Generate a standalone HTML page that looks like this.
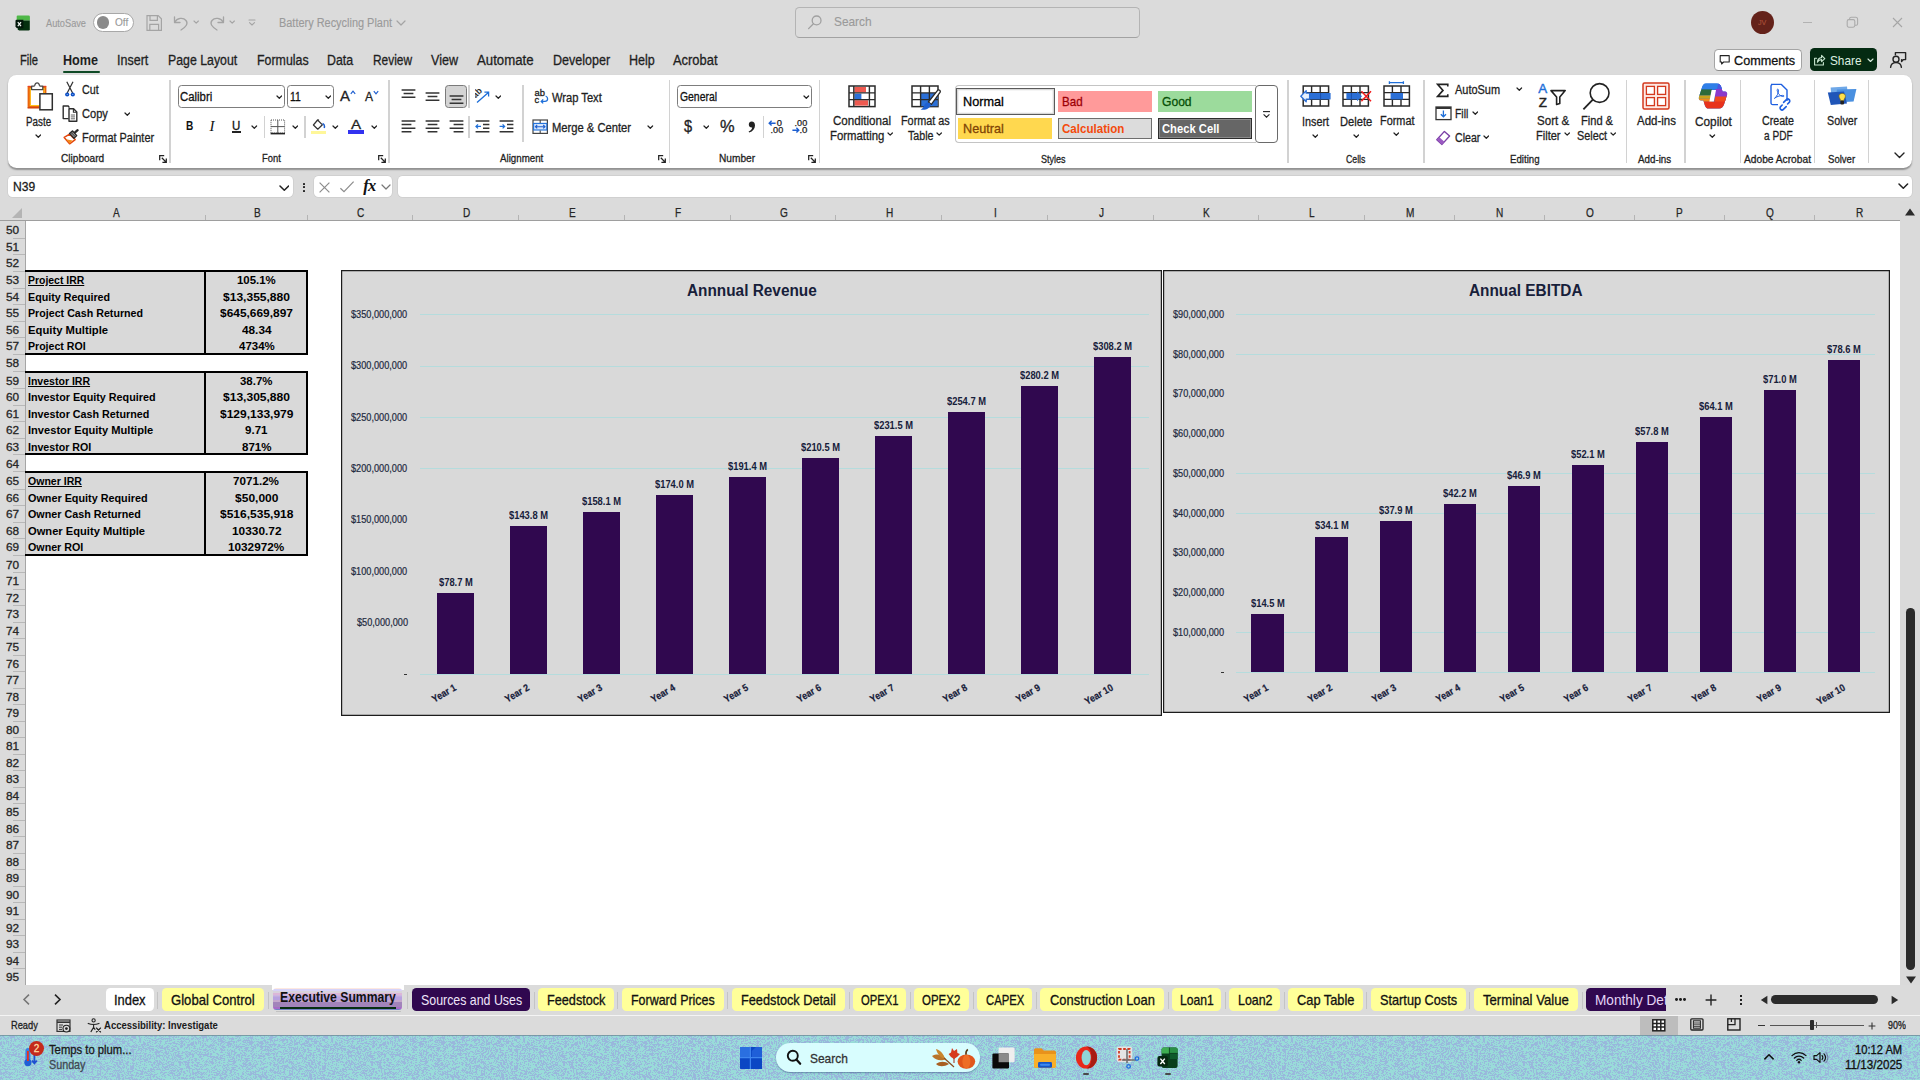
<!DOCTYPE html>
<html lang="en"><head><meta charset="utf-8"><title>Battery Recycling Plant - Excel</title><style>
html,body{margin:0;padding:0;}
body{width:1920px;height:1080px;overflow:hidden;position:relative;background:#dbdbdb;font-family:"Liberation Sans",sans-serif;}
.b{position:absolute;box-sizing:border-box;display:block;}
.t{position:absolute;white-space:nowrap;line-height:1;transform-origin:0 50%;display:block;}
</style></head><body>
<div class="b" style="left:26.00px;top:221.00px;width:1874.00px;height:764.00px;background:#fff;"></div>
<div class="b" style="left:0.00px;top:201.00px;width:1920.00px;height:20.00px;background:#dbdbdb;"></div>
<div class="b" style="left:0.00px;top:220.00px;width:1900.00px;height:1.00px;background:#9e9e9e;"></div>
<div class="b" style="left:0.00px;top:221.00px;width:25.00px;height:764.00px;background:#dbdbdb;"></div>
<div class="b" style="left:25.00px;top:221.00px;width:1.00px;height:764.00px;background:#a6a6a6;"></div>
<svg class="b" style="left:11.00px;top:207.00px;" width="12" height="12" viewBox="0 0 12 12"><path d="M11 1 L11 11 L1 11 Z" fill="#b4b4b4"/></svg>
<div class="b" style="left:205.00px;top:214.50px;width:1.00px;height:5.50px;background:#b4b4b4;"></div>
<span class="t" style="left:113.09px;top:207.00px;font-size:12px;color:#262626;transform:scaleX(0.8400);-webkit-text-stroke:0.25px #262626;">A</span>
<div class="b" style="left:307.00px;top:214.50px;width:1.00px;height:5.50px;background:#b4b4b4;"></div>
<span class="t" style="left:253.84px;top:207.00px;font-size:12px;color:#262626;transform:scaleX(0.8400);-webkit-text-stroke:0.25px #262626;">B</span>
<div class="b" style="left:412.00px;top:214.50px;width:1.00px;height:5.50px;background:#b4b4b4;"></div>
<span class="t" style="left:357.06px;top:207.00px;font-size:12px;color:#262626;transform:scaleX(0.8400);-webkit-text-stroke:0.25px #262626;">C</span>
<div class="b" style="left:518.00px;top:214.50px;width:1.00px;height:5.50px;background:#b4b4b4;"></div>
<span class="t" style="left:462.56px;top:207.00px;font-size:12px;color:#262626;transform:scaleX(0.8400);-webkit-text-stroke:0.25px #262626;">D</span>
<div class="b" style="left:624.00px;top:214.50px;width:1.00px;height:5.50px;background:#b4b4b4;"></div>
<span class="t" style="left:568.84px;top:207.00px;font-size:12px;color:#262626;transform:scaleX(0.8400);-webkit-text-stroke:0.25px #262626;">E</span>
<div class="b" style="left:730.00px;top:214.50px;width:1.00px;height:5.50px;background:#b4b4b4;"></div>
<span class="t" style="left:675.12px;top:207.00px;font-size:12px;color:#262626;transform:scaleX(0.8400);-webkit-text-stroke:0.25px #262626;">F</span>
<div class="b" style="left:835.00px;top:214.50px;width:1.00px;height:5.50px;background:#b4b4b4;"></div>
<span class="t" style="left:779.78px;top:207.00px;font-size:12px;color:#262626;transform:scaleX(0.8400);-webkit-text-stroke:0.25px #262626;">G</span>
<div class="b" style="left:941.00px;top:214.50px;width:1.00px;height:5.50px;background:#b4b4b4;"></div>
<span class="t" style="left:885.56px;top:207.00px;font-size:12px;color:#262626;transform:scaleX(0.8400);-webkit-text-stroke:0.25px #262626;">H</span>
<div class="b" style="left:1047.00px;top:214.50px;width:1.00px;height:5.50px;background:#b4b4b4;"></div>
<span class="t" style="left:993.80px;top:207.00px;font-size:12px;color:#262626;transform:scaleX(0.8400);-webkit-text-stroke:0.25px #262626;">I</span>
<div class="b" style="left:1153.00px;top:214.50px;width:1.00px;height:5.50px;background:#b4b4b4;"></div>
<span class="t" style="left:1098.68px;top:207.00px;font-size:12px;color:#262626;transform:scaleX(0.8400);-webkit-text-stroke:0.25px #262626;">J</span>
<div class="b" style="left:1258.00px;top:214.50px;width:1.00px;height:5.50px;background:#b4b4b4;"></div>
<span class="t" style="left:1203.34px;top:207.00px;font-size:12px;color:#262626;transform:scaleX(0.8400);-webkit-text-stroke:0.25px #262626;">K</span>
<div class="b" style="left:1363.50px;top:214.50px;width:1.00px;height:5.50px;background:#b4b4b4;"></div>
<span class="t" style="left:1309.15px;top:207.00px;font-size:12px;color:#262626;transform:scaleX(0.8400);-webkit-text-stroke:0.25px #262626;">L</span>
<div class="b" style="left:1453.50px;top:214.50px;width:1.00px;height:5.50px;background:#b4b4b4;"></div>
<span class="t" style="left:1405.50px;top:207.00px;font-size:12px;color:#262626;transform:scaleX(0.8400);-webkit-text-stroke:0.25px #262626;">M</span>
<div class="b" style="left:1543.50px;top:214.50px;width:1.00px;height:5.50px;background:#b4b4b4;"></div>
<span class="t" style="left:1496.06px;top:207.00px;font-size:12px;color:#262626;transform:scaleX(0.8400);-webkit-text-stroke:0.25px #262626;">N</span>
<div class="b" style="left:1633.50px;top:214.50px;width:1.00px;height:5.50px;background:#b4b4b4;"></div>
<span class="t" style="left:1585.78px;top:207.00px;font-size:12px;color:#262626;transform:scaleX(0.8400);-webkit-text-stroke:0.25px #262626;">O</span>
<div class="b" style="left:1723.50px;top:214.50px;width:1.00px;height:5.50px;background:#b4b4b4;"></div>
<span class="t" style="left:1676.34px;top:207.00px;font-size:12px;color:#262626;transform:scaleX(0.8400);-webkit-text-stroke:0.25px #262626;">P</span>
<div class="b" style="left:1813.50px;top:214.50px;width:1.00px;height:5.50px;background:#b4b4b4;"></div>
<span class="t" style="left:1765.78px;top:207.00px;font-size:12px;color:#262626;transform:scaleX(0.8400);-webkit-text-stroke:0.25px #262626;">Q</span>
<span class="t" style="left:1856.06px;top:207.00px;font-size:12px;color:#262626;transform:scaleX(0.8400);-webkit-text-stroke:0.25px #262626;">R</span>
<span class="t" style="left:6.12px;top:224.00px;font-size:11.6px;color:#262626;transform:scaleX(1.0200);-webkit-text-stroke:0.3px #262626;">50</span>
<div class="b" style="left:13.00px;top:237.50px;width:12.00px;height:1.00px;background:#b8b8b8;"></div>
<span class="t" style="left:6.12px;top:241.00px;font-size:11.6px;color:#262626;transform:scaleX(1.0200);-webkit-text-stroke:0.3px #262626;">51</span>
<div class="b" style="left:13.00px;top:253.50px;width:12.00px;height:1.00px;background:#b8b8b8;"></div>
<span class="t" style="left:6.12px;top:257.00px;font-size:11.6px;color:#262626;transform:scaleX(1.0200);-webkit-text-stroke:0.3px #262626;">52</span>
<div class="b" style="left:13.00px;top:270.50px;width:12.00px;height:1.00px;background:#b8b8b8;"></div>
<span class="t" style="left:6.12px;top:274.00px;font-size:11.6px;color:#262626;transform:scaleX(1.0200);-webkit-text-stroke:0.3px #262626;">53</span>
<div class="b" style="left:13.00px;top:287.50px;width:12.00px;height:1.00px;background:#b8b8b8;"></div>
<span class="t" style="left:6.12px;top:291.00px;font-size:11.6px;color:#262626;transform:scaleX(1.0200);-webkit-text-stroke:0.3px #262626;">54</span>
<div class="b" style="left:13.00px;top:303.50px;width:12.00px;height:1.00px;background:#b8b8b8;"></div>
<span class="t" style="left:6.12px;top:307.00px;font-size:11.6px;color:#262626;transform:scaleX(1.0200);-webkit-text-stroke:0.3px #262626;">55</span>
<div class="b" style="left:13.00px;top:320.50px;width:12.00px;height:1.00px;background:#b8b8b8;"></div>
<span class="t" style="left:6.12px;top:324.00px;font-size:11.6px;color:#262626;transform:scaleX(1.0200);-webkit-text-stroke:0.3px #262626;">56</span>
<div class="b" style="left:13.00px;top:336.50px;width:12.00px;height:1.00px;background:#b8b8b8;"></div>
<span class="t" style="left:6.12px;top:340.00px;font-size:11.6px;color:#262626;transform:scaleX(1.0200);-webkit-text-stroke:0.3px #262626;">57</span>
<div class="b" style="left:13.00px;top:353.50px;width:12.00px;height:1.00px;background:#b8b8b8;"></div>
<span class="t" style="left:6.12px;top:357.00px;font-size:11.6px;color:#262626;transform:scaleX(1.0200);-webkit-text-stroke:0.3px #262626;">58</span>
<div class="b" style="left:13.00px;top:370.50px;width:12.00px;height:1.00px;background:#b8b8b8;"></div>
<span class="t" style="left:6.12px;top:375.00px;font-size:11.6px;color:#262626;transform:scaleX(1.0200);-webkit-text-stroke:0.3px #262626;">59</span>
<div class="b" style="left:13.00px;top:387.50px;width:12.00px;height:1.00px;background:#b8b8b8;"></div>
<span class="t" style="left:6.12px;top:391.00px;font-size:11.6px;color:#262626;transform:scaleX(1.0200);-webkit-text-stroke:0.3px #262626;">60</span>
<div class="b" style="left:13.00px;top:404.50px;width:12.00px;height:1.00px;background:#b8b8b8;"></div>
<span class="t" style="left:6.12px;top:408.00px;font-size:11.6px;color:#262626;transform:scaleX(1.0200);-webkit-text-stroke:0.3px #262626;">61</span>
<div class="b" style="left:13.00px;top:420.50px;width:12.00px;height:1.00px;background:#b8b8b8;"></div>
<span class="t" style="left:6.12px;top:424.00px;font-size:11.6px;color:#262626;transform:scaleX(1.0200);-webkit-text-stroke:0.3px #262626;">62</span>
<div class="b" style="left:13.00px;top:437.50px;width:12.00px;height:1.00px;background:#b8b8b8;"></div>
<span class="t" style="left:6.12px;top:441.00px;font-size:11.6px;color:#262626;transform:scaleX(1.0200);-webkit-text-stroke:0.3px #262626;">63</span>
<div class="b" style="left:13.00px;top:453.50px;width:12.00px;height:1.00px;background:#b8b8b8;"></div>
<span class="t" style="left:6.12px;top:458.00px;font-size:11.6px;color:#262626;transform:scaleX(1.0200);-webkit-text-stroke:0.3px #262626;">64</span>
<div class="b" style="left:13.00px;top:470.50px;width:12.00px;height:1.00px;background:#b8b8b8;"></div>
<span class="t" style="left:6.12px;top:475.00px;font-size:11.6px;color:#262626;transform:scaleX(1.0200);-webkit-text-stroke:0.3px #262626;">65</span>
<div class="b" style="left:13.00px;top:488.50px;width:12.00px;height:1.00px;background:#b8b8b8;"></div>
<span class="t" style="left:6.12px;top:492.00px;font-size:11.6px;color:#262626;transform:scaleX(1.0200);-webkit-text-stroke:0.3px #262626;">66</span>
<div class="b" style="left:13.00px;top:504.50px;width:12.00px;height:1.00px;background:#b8b8b8;"></div>
<span class="t" style="left:6.12px;top:508.00px;font-size:11.6px;color:#262626;transform:scaleX(1.0200);-webkit-text-stroke:0.3px #262626;">67</span>
<div class="b" style="left:13.00px;top:521.50px;width:12.00px;height:1.00px;background:#b8b8b8;"></div>
<span class="t" style="left:6.12px;top:525.00px;font-size:11.6px;color:#262626;transform:scaleX(1.0200);-webkit-text-stroke:0.3px #262626;">68</span>
<div class="b" style="left:13.00px;top:537.50px;width:12.00px;height:1.00px;background:#b8b8b8;"></div>
<span class="t" style="left:6.12px;top:541.00px;font-size:11.6px;color:#262626;transform:scaleX(1.0200);-webkit-text-stroke:0.3px #262626;">69</span>
<div class="b" style="left:13.00px;top:554.50px;width:12.00px;height:1.00px;background:#b8b8b8;"></div>
<span class="t" style="left:6.12px;top:559.00px;font-size:11.6px;color:#262626;transform:scaleX(1.0200);-webkit-text-stroke:0.3px #262626;">70</span>
<div class="b" style="left:13.00px;top:571.50px;width:12.00px;height:1.00px;background:#b8b8b8;"></div>
<span class="t" style="left:6.12px;top:575.00px;font-size:11.6px;color:#262626;transform:scaleX(1.0200);-webkit-text-stroke:0.3px #262626;">71</span>
<div class="b" style="left:13.00px;top:588.50px;width:12.00px;height:1.00px;background:#b8b8b8;"></div>
<span class="t" style="left:6.12px;top:592.00px;font-size:11.6px;color:#262626;transform:scaleX(1.0200);-webkit-text-stroke:0.3px #262626;">72</span>
<div class="b" style="left:13.00px;top:604.50px;width:12.00px;height:1.00px;background:#b8b8b8;"></div>
<span class="t" style="left:6.12px;top:608.00px;font-size:11.6px;color:#262626;transform:scaleX(1.0200);-webkit-text-stroke:0.3px #262626;">73</span>
<div class="b" style="left:13.00px;top:621.50px;width:12.00px;height:1.00px;background:#b8b8b8;"></div>
<span class="t" style="left:6.12px;top:625.00px;font-size:11.6px;color:#262626;transform:scaleX(1.0200);-webkit-text-stroke:0.3px #262626;">74</span>
<div class="b" style="left:13.00px;top:637.50px;width:12.00px;height:1.00px;background:#b8b8b8;"></div>
<span class="t" style="left:6.12px;top:641.00px;font-size:11.6px;color:#262626;transform:scaleX(1.0200);-webkit-text-stroke:0.3px #262626;">75</span>
<div class="b" style="left:13.00px;top:654.50px;width:12.00px;height:1.00px;background:#b8b8b8;"></div>
<span class="t" style="left:6.12px;top:658.00px;font-size:11.6px;color:#262626;transform:scaleX(1.0200);-webkit-text-stroke:0.3px #262626;">76</span>
<div class="b" style="left:13.00px;top:670.50px;width:12.00px;height:1.00px;background:#b8b8b8;"></div>
<span class="t" style="left:6.12px;top:674.00px;font-size:11.6px;color:#262626;transform:scaleX(1.0200);-webkit-text-stroke:0.3px #262626;">77</span>
<div class="b" style="left:13.00px;top:687.50px;width:12.00px;height:1.00px;background:#b8b8b8;"></div>
<span class="t" style="left:6.12px;top:691.00px;font-size:11.6px;color:#262626;transform:scaleX(1.0200);-webkit-text-stroke:0.3px #262626;">78</span>
<div class="b" style="left:13.00px;top:703.50px;width:12.00px;height:1.00px;background:#b8b8b8;"></div>
<span class="t" style="left:6.12px;top:707.00px;font-size:11.6px;color:#262626;transform:scaleX(1.0200);-webkit-text-stroke:0.3px #262626;">79</span>
<div class="b" style="left:13.00px;top:720.50px;width:12.00px;height:1.00px;background:#b8b8b8;"></div>
<span class="t" style="left:6.12px;top:724.00px;font-size:11.6px;color:#262626;transform:scaleX(1.0200);-webkit-text-stroke:0.3px #262626;">80</span>
<div class="b" style="left:13.00px;top:736.50px;width:12.00px;height:1.00px;background:#b8b8b8;"></div>
<span class="t" style="left:6.12px;top:740.00px;font-size:11.6px;color:#262626;transform:scaleX(1.0200);-webkit-text-stroke:0.3px #262626;">81</span>
<div class="b" style="left:13.00px;top:753.50px;width:12.00px;height:1.00px;background:#b8b8b8;"></div>
<span class="t" style="left:6.12px;top:757.00px;font-size:11.6px;color:#262626;transform:scaleX(1.0200);-webkit-text-stroke:0.3px #262626;">82</span>
<div class="b" style="left:13.00px;top:769.50px;width:12.00px;height:1.00px;background:#b8b8b8;"></div>
<span class="t" style="left:6.12px;top:773.00px;font-size:11.6px;color:#262626;transform:scaleX(1.0200);-webkit-text-stroke:0.3px #262626;">83</span>
<div class="b" style="left:13.00px;top:786.50px;width:12.00px;height:1.00px;background:#b8b8b8;"></div>
<span class="t" style="left:6.12px;top:790.00px;font-size:11.6px;color:#262626;transform:scaleX(1.0200);-webkit-text-stroke:0.3px #262626;">84</span>
<div class="b" style="left:13.00px;top:802.50px;width:12.00px;height:1.00px;background:#b8b8b8;"></div>
<span class="t" style="left:6.12px;top:806.00px;font-size:11.6px;color:#262626;transform:scaleX(1.0200);-webkit-text-stroke:0.3px #262626;">85</span>
<div class="b" style="left:13.00px;top:819.50px;width:12.00px;height:1.00px;background:#b8b8b8;"></div>
<span class="t" style="left:6.12px;top:823.00px;font-size:11.6px;color:#262626;transform:scaleX(1.0200);-webkit-text-stroke:0.3px #262626;">86</span>
<div class="b" style="left:13.00px;top:835.50px;width:12.00px;height:1.00px;background:#b8b8b8;"></div>
<span class="t" style="left:6.12px;top:839.00px;font-size:11.6px;color:#262626;transform:scaleX(1.0200);-webkit-text-stroke:0.3px #262626;">87</span>
<div class="b" style="left:13.00px;top:852.50px;width:12.00px;height:1.00px;background:#b8b8b8;"></div>
<span class="t" style="left:6.12px;top:856.00px;font-size:11.6px;color:#262626;transform:scaleX(1.0200);-webkit-text-stroke:0.3px #262626;">88</span>
<div class="b" style="left:13.00px;top:868.50px;width:12.00px;height:1.00px;background:#b8b8b8;"></div>
<span class="t" style="left:6.12px;top:872.00px;font-size:11.6px;color:#262626;transform:scaleX(1.0200);-webkit-text-stroke:0.3px #262626;">89</span>
<div class="b" style="left:13.00px;top:885.50px;width:12.00px;height:1.00px;background:#b8b8b8;"></div>
<span class="t" style="left:6.12px;top:889.00px;font-size:11.6px;color:#262626;transform:scaleX(1.0200);-webkit-text-stroke:0.3px #262626;">90</span>
<div class="b" style="left:13.00px;top:901.50px;width:12.00px;height:1.00px;background:#b8b8b8;"></div>
<span class="t" style="left:6.12px;top:905.00px;font-size:11.6px;color:#262626;transform:scaleX(1.0200);-webkit-text-stroke:0.3px #262626;">91</span>
<div class="b" style="left:13.00px;top:918.50px;width:12.00px;height:1.00px;background:#b8b8b8;"></div>
<span class="t" style="left:6.12px;top:922.00px;font-size:11.6px;color:#262626;transform:scaleX(1.0200);-webkit-text-stroke:0.3px #262626;">92</span>
<div class="b" style="left:13.00px;top:934.50px;width:12.00px;height:1.00px;background:#b8b8b8;"></div>
<span class="t" style="left:6.12px;top:938.00px;font-size:11.6px;color:#262626;transform:scaleX(1.0200);-webkit-text-stroke:0.3px #262626;">93</span>
<div class="b" style="left:13.00px;top:951.50px;width:12.00px;height:1.00px;background:#b8b8b8;"></div>
<span class="t" style="left:6.12px;top:955.00px;font-size:11.6px;color:#262626;transform:scaleX(1.0200);-webkit-text-stroke:0.3px #262626;">94</span>
<div class="b" style="left:13.00px;top:967.50px;width:12.00px;height:1.00px;background:#b8b8b8;"></div>
<span class="t" style="left:6.12px;top:971.00px;font-size:11.6px;color:#262626;transform:scaleX(1.0200);-webkit-text-stroke:0.3px #262626;">95</span>
<div class="b" style="left:26.00px;top:270.00px;width:282.00px;height:85.00px;background:#d9d9d9;"></div>
<div class="b" style="left:25.00px;top:270.00px;width:283.00px;height:2.00px;background:#000;"></div>
<div class="b" style="left:25.00px;top:353.00px;width:283.00px;height:2.00px;background:#000;"></div>
<div class="b" style="left:204.00px;top:270.00px;width:2.00px;height:85.00px;background:#000;"></div>
<div class="b" style="left:306.20px;top:270.00px;width:1.80px;height:85.00px;background:#000;"></div>
<span class="t" style="left:27.90px;top:274.00px;font-size:11.6px;color:#000;font-weight:700;text-decoration:underline;transform:scaleX(0.9004);">Project IRR</span>
<span class="t" style="left:237.02px;top:274.00px;font-size:11.6px;color:#000;font-weight:700;transform:scaleX(0.9849);">105.1%</span>
<span class="t" style="left:27.90px;top:291.00px;font-size:11.6px;color:#000;font-weight:700;transform:scaleX(0.9231);">Equity Required</span>
<span class="t" style="left:222.90px;top:291.00px;font-size:11.6px;color:#000;font-weight:700;transform:scaleX(1.0386);">$13,355,880</span>
<span class="t" style="left:27.90px;top:307.00px;font-size:11.6px;color:#000;font-weight:700;transform:scaleX(0.9204);">Project Cash Returned</span>
<span class="t" style="left:219.90px;top:307.00px;font-size:11.6px;color:#000;font-weight:700;transform:scaleX(1.0288);">$645,669,897</span>
<span class="t" style="left:27.90px;top:324.00px;font-size:11.6px;color:#000;font-weight:700;transform:scaleX(0.9711);">Equity Multiple</span>
<span class="t" style="left:241.65px;top:324.00px;font-size:11.6px;color:#000;font-weight:700;transform:scaleX(1.0162);">48.34</span>
<span class="t" style="left:27.90px;top:340.00px;font-size:11.6px;color:#000;font-weight:700;transform:scaleX(0.9118);">Project ROI</span>
<span class="t" style="left:238.52px;top:340.00px;font-size:11.6px;color:#000;font-weight:700;transform:scaleX(0.9898);">4734%</span>
<div class="b" style="left:26.00px;top:370.80px;width:282.00px;height:84.40px;background:#d9d9d9;"></div>
<div class="b" style="left:25.00px;top:370.80px;width:283.00px;height:2.00px;background:#000;"></div>
<div class="b" style="left:25.00px;top:453.20px;width:283.00px;height:2.00px;background:#000;"></div>
<div class="b" style="left:204.00px;top:370.80px;width:2.00px;height:84.40px;background:#000;"></div>
<div class="b" style="left:306.20px;top:370.80px;width:1.80px;height:84.40px;background:#000;"></div>
<span class="t" style="left:27.90px;top:375.00px;font-size:11.6px;color:#000;font-weight:700;text-decoration:underline;transform:scaleX(0.9089);">Investor IRR</span>
<span class="t" style="left:240.15px;top:375.00px;font-size:11.6px;color:#000;font-weight:700;transform:scaleX(0.9881);">38.7%</span>
<span class="t" style="left:27.90px;top:391.00px;font-size:11.6px;color:#000;font-weight:700;transform:scaleX(0.9294);">Investor Equity Required</span>
<span class="t" style="left:222.90px;top:391.00px;font-size:11.6px;color:#000;font-weight:700;transform:scaleX(1.0386);">$13,305,880</span>
<span class="t" style="left:27.90px;top:408.00px;font-size:11.6px;color:#000;font-weight:700;transform:scaleX(0.9270);">Investor Cash Returned</span>
<span class="t" style="left:219.65px;top:408.00px;font-size:11.6px;color:#000;font-weight:700;transform:scaleX(1.0358);">$129,133,979</span>
<span class="t" style="left:27.90px;top:424.00px;font-size:11.6px;color:#000;font-weight:700;transform:scaleX(0.9577);">Investor Equity Multiple</span>
<span class="t" style="left:245.15px;top:424.00px;font-size:11.6px;color:#000;font-weight:700;transform:scaleX(0.9966);">9.71</span>
<span class="t" style="left:27.90px;top:441.00px;font-size:11.6px;color:#000;font-weight:700;transform:scaleX(0.9178);">Investor ROI</span>
<span class="t" style="left:241.65px;top:441.00px;font-size:11.6px;color:#000;font-weight:700;transform:scaleX(0.9943);">871%</span>
<div class="b" style="left:26.00px;top:471.20px;width:282.00px;height:84.30px;background:#d9d9d9;"></div>
<div class="b" style="left:25.00px;top:471.20px;width:283.00px;height:2.00px;background:#000;"></div>
<div class="b" style="left:25.00px;top:553.50px;width:283.00px;height:2.00px;background:#000;"></div>
<div class="b" style="left:204.00px;top:471.20px;width:2.00px;height:84.30px;background:#000;"></div>
<div class="b" style="left:306.20px;top:471.20px;width:1.80px;height:84.30px;background:#000;"></div>
<span class="t" style="left:27.90px;top:475.00px;font-size:11.6px;color:#000;font-weight:700;text-decoration:underline;transform:scaleX(0.9090);">Owner IRR</span>
<span class="t" style="left:233.40px;top:475.00px;font-size:11.6px;color:#000;font-weight:700;transform:scaleX(1.0045);">7071.2%</span>
<span class="t" style="left:27.90px;top:492.00px;font-size:11.6px;color:#000;font-weight:700;transform:scaleX(0.9325);">Owner Equity Required</span>
<span class="t" style="left:234.65px;top:492.00px;font-size:11.6px;color:#000;font-weight:700;transform:scaleX(1.0374);">$50,000</span>
<span class="t" style="left:27.90px;top:508.00px;font-size:11.6px;color:#000;font-weight:700;transform:scaleX(0.9268);">Owner Cash Returned</span>
<span class="t" style="left:219.65px;top:508.00px;font-size:11.6px;color:#000;font-weight:700;transform:scaleX(1.0358);">$516,535,918</span>
<span class="t" style="left:27.90px;top:525.00px;font-size:11.6px;color:#000;font-weight:700;transform:scaleX(0.9614);">Owner Equity Multiple</span>
<span class="t" style="left:231.65px;top:525.00px;font-size:11.6px;color:#000;font-weight:700;transform:scaleX(1.0231);">10330.72</span>
<span class="t" style="left:27.90px;top:541.00px;font-size:11.6px;color:#000;font-weight:700;transform:scaleX(0.9225);">Owner ROI</span>
<span class="t" style="left:228.27px;top:541.00px;font-size:11.6px;color:#000;font-weight:700;transform:scaleX(1.0140);">1032972%</span>
<div class="b" style="left:341.00px;top:270.00px;width:821.00px;height:445.50px;background:#d9d9d9;box-shadow:inset 0 0 0 1.2px #1c1c1c;"></div>
<div class="b" style="left:420.00px;top:314.00px;width:729.30px;height:1.00px;background:#b5dcdd;"></div>
<span class="t" style="left:351.44px;top:310.00px;font-size:10px;color:#222a40;transform:scaleX(0.9180);-webkit-text-stroke:0.2px #222a40;">$350,000,000</span>
<div class="b" style="left:420.00px;top:366.00px;width:729.30px;height:1.00px;background:#b5dcdd;"></div>
<span class="t" style="left:351.44px;top:361.00px;font-size:10px;color:#222a40;transform:scaleX(0.9180);-webkit-text-stroke:0.2px #222a40;">$300,000,000</span>
<div class="b" style="left:420.00px;top:417.00px;width:729.30px;height:1.00px;background:#b5dcdd;"></div>
<span class="t" style="left:351.44px;top:413.00px;font-size:10px;color:#222a40;transform:scaleX(0.9180);-webkit-text-stroke:0.2px #222a40;">$250,000,000</span>
<div class="b" style="left:420.00px;top:468.00px;width:729.30px;height:1.00px;background:#b5dcdd;"></div>
<span class="t" style="left:351.44px;top:464.00px;font-size:10px;color:#222a40;transform:scaleX(0.9180);-webkit-text-stroke:0.2px #222a40;">$200,000,000</span>
<span class="t" style="left:351.44px;top:515.00px;font-size:10px;color:#222a40;transform:scaleX(0.9180);-webkit-text-stroke:0.2px #222a40;">$150,000,000</span>
<span class="t" style="left:351.44px;top:567.00px;font-size:10px;color:#222a40;transform:scaleX(0.9180);-webkit-text-stroke:0.2px #222a40;">$100,000,000</span>
<span class="t" style="left:356.55px;top:618.00px;font-size:10px;color:#222a40;transform:scaleX(0.9180);-webkit-text-stroke:0.2px #222a40;">$50,000,000</span>
<div class="b" style="left:420.00px;top:674.00px;width:729.30px;height:1.00px;background:#b5dcdd;"></div>
<div class="b" style="left:404.30px;top:673.80px;width:3.20px;height:1.10px;background:#333;"></div>
<span class="t" style="left:686.64px;top:283.00px;font-size:16px;color:#17203a;font-weight:700;transform:scaleX(0.9600);">Annnual Revenue</span>
<div class="b" style="left:437.10px;top:593.37px;width:37.20px;height:80.93px;background:#30084f;"></div>
<span class="t" style="left:438.79px;top:578.00px;font-size:10.4px;color:#17203a;font-weight:700;transform:scaleX(0.9000);">$78.7 M</span>
<span class="t" style="left:429.27px;top:681.20px;font-size:10px;font-weight:700;color:#17203a;line-height:11px;-webkit-text-stroke:0.2px #17203a;width:26.23px;transform-origin:100% 50%;transform:rotate(-30deg);"><span style="display:inline-block;transform-origin:0 50%;transform:scaleX(0.89);white-space:nowrap">Year 1</span></span>
<div class="b" style="left:510.10px;top:526.43px;width:37.20px;height:147.87px;background:#30084f;"></div>
<span class="t" style="left:509.19px;top:511.00px;font-size:10.4px;color:#17203a;font-weight:700;transform:scaleX(0.9000);">$143.8 M</span>
<span class="t" style="left:502.27px;top:681.20px;font-size:10px;font-weight:700;color:#17203a;line-height:11px;-webkit-text-stroke:0.2px #17203a;width:26.23px;transform-origin:100% 50%;transform:rotate(-30deg);"><span style="display:inline-block;transform-origin:0 50%;transform:scaleX(0.89);white-space:nowrap">Year 2</span></span>
<div class="b" style="left:583.10px;top:511.73px;width:37.20px;height:162.57px;background:#30084f;"></div>
<span class="t" style="left:582.19px;top:497.00px;font-size:10.4px;color:#17203a;font-weight:700;transform:scaleX(0.9000);">$158.1 M</span>
<span class="t" style="left:575.27px;top:681.20px;font-size:10px;font-weight:700;color:#17203a;line-height:11px;-webkit-text-stroke:0.2px #17203a;width:26.23px;transform-origin:100% 50%;transform:rotate(-30deg);"><span style="display:inline-block;transform-origin:0 50%;transform:scaleX(0.89);white-space:nowrap">Year 3</span></span>
<div class="b" style="left:656.10px;top:495.38px;width:37.20px;height:178.92px;background:#30084f;"></div>
<span class="t" style="left:655.19px;top:480.00px;font-size:10.4px;color:#17203a;font-weight:700;transform:scaleX(0.9000);">$174.0 M</span>
<span class="t" style="left:648.27px;top:681.20px;font-size:10px;font-weight:700;color:#17203a;line-height:11px;-webkit-text-stroke:0.2px #17203a;width:26.23px;transform-origin:100% 50%;transform:rotate(-30deg);"><span style="display:inline-block;transform-origin:0 50%;transform:scaleX(0.89);white-space:nowrap">Year 4</span></span>
<div class="b" style="left:729.10px;top:477.49px;width:37.20px;height:196.81px;background:#30084f;"></div>
<span class="t" style="left:728.19px;top:462.00px;font-size:10.4px;color:#17203a;font-weight:700;transform:scaleX(0.9000);">$191.4 M</span>
<span class="t" style="left:721.27px;top:681.20px;font-size:10px;font-weight:700;color:#17203a;line-height:11px;-webkit-text-stroke:0.2px #17203a;width:26.23px;transform-origin:100% 50%;transform:rotate(-30deg);"><span style="display:inline-block;transform-origin:0 50%;transform:scaleX(0.89);white-space:nowrap">Year 5</span></span>
<div class="b" style="left:802.10px;top:457.85px;width:37.20px;height:216.45px;background:#30084f;"></div>
<span class="t" style="left:801.19px;top:443.00px;font-size:10.4px;color:#17203a;font-weight:700;transform:scaleX(0.9000);">$210.5 M</span>
<span class="t" style="left:794.27px;top:681.20px;font-size:10px;font-weight:700;color:#17203a;line-height:11px;-webkit-text-stroke:0.2px #17203a;width:26.23px;transform-origin:100% 50%;transform:rotate(-30deg);"><span style="display:inline-block;transform-origin:0 50%;transform:scaleX(0.89);white-space:nowrap">Year 6</span></span>
<div class="b" style="left:875.10px;top:436.25px;width:37.20px;height:238.05px;background:#30084f;"></div>
<span class="t" style="left:874.19px;top:421.00px;font-size:10.4px;color:#17203a;font-weight:700;transform:scaleX(0.9000);">$231.5 M</span>
<span class="t" style="left:867.27px;top:681.20px;font-size:10px;font-weight:700;color:#17203a;line-height:11px;-webkit-text-stroke:0.2px #17203a;width:26.23px;transform-origin:100% 50%;transform:rotate(-30deg);"><span style="display:inline-block;transform-origin:0 50%;transform:scaleX(0.89);white-space:nowrap">Year 7</span></span>
<div class="b" style="left:948.10px;top:412.40px;width:37.20px;height:261.90px;background:#30084f;"></div>
<span class="t" style="left:947.19px;top:397.00px;font-size:10.4px;color:#17203a;font-weight:700;transform:scaleX(0.9000);">$254.7 M</span>
<span class="t" style="left:940.27px;top:681.20px;font-size:10px;font-weight:700;color:#17203a;line-height:11px;-webkit-text-stroke:0.2px #17203a;width:26.23px;transform-origin:100% 50%;transform:rotate(-30deg);"><span style="display:inline-block;transform-origin:0 50%;transform:scaleX(0.89);white-space:nowrap">Year 8</span></span>
<div class="b" style="left:1021.10px;top:386.17px;width:37.20px;height:288.13px;background:#30084f;"></div>
<span class="t" style="left:1020.19px;top:371.00px;font-size:10.4px;color:#17203a;font-weight:700;transform:scaleX(0.9000);">$280.2 M</span>
<span class="t" style="left:1013.27px;top:681.20px;font-size:10px;font-weight:700;color:#17203a;line-height:11px;-webkit-text-stroke:0.2px #17203a;width:26.23px;transform-origin:100% 50%;transform:rotate(-30deg);"><span style="display:inline-block;transform-origin:0 50%;transform:scaleX(0.89);white-space:nowrap">Year 9</span></span>
<div class="b" style="left:1094.10px;top:357.38px;width:37.20px;height:316.92px;background:#30084f;"></div>
<span class="t" style="left:1093.19px;top:342.00px;font-size:10.4px;color:#17203a;font-weight:700;transform:scaleX(0.9000);">$308.2 M</span>
<span class="t" style="left:1081.32px;top:681.20px;font-size:10px;font-weight:700;color:#17203a;line-height:11px;-webkit-text-stroke:0.2px #17203a;width:31.18px;transform-origin:100% 50%;transform:rotate(-30deg);"><span style="display:inline-block;transform-origin:0 50%;transform:scaleX(0.89);white-space:nowrap">Year 10</span></span>
<div class="b" style="left:1163.00px;top:270.00px;width:727.00px;height:443.20px;background:#d9d9d9;box-shadow:inset 0 0 0 1.2px #1c1c1c;"></div>
<div class="b" style="left:1235.80px;top:314.00px;width:639.40px;height:1.00px;background:#b5dcdd;"></div>
<span class="t" style="left:1173.25px;top:310.00px;font-size:10px;color:#222a40;transform:scaleX(0.9180);-webkit-text-stroke:0.2px #222a40;">$90,000,000</span>
<div class="b" style="left:1235.80px;top:354.00px;width:639.40px;height:1.00px;background:#b5dcdd;"></div>
<span class="t" style="left:1173.25px;top:350.00px;font-size:10px;color:#222a40;transform:scaleX(0.9180);-webkit-text-stroke:0.2px #222a40;">$80,000,000</span>
<span class="t" style="left:1173.25px;top:389.00px;font-size:10px;color:#222a40;transform:scaleX(0.9180);-webkit-text-stroke:0.2px #222a40;">$70,000,000</span>
<span class="t" style="left:1173.25px;top:429.00px;font-size:10px;color:#222a40;transform:scaleX(0.9180);-webkit-text-stroke:0.2px #222a40;">$60,000,000</span>
<div class="b" style="left:1235.80px;top:473.00px;width:639.40px;height:1.00px;background:#b5dcdd;"></div>
<span class="t" style="left:1173.25px;top:469.00px;font-size:10px;color:#222a40;transform:scaleX(0.9180);-webkit-text-stroke:0.2px #222a40;">$50,000,000</span>
<div class="b" style="left:1235.80px;top:513.00px;width:639.40px;height:1.00px;background:#b5dcdd;"></div>
<span class="t" style="left:1173.25px;top:509.00px;font-size:10px;color:#222a40;transform:scaleX(0.9180);-webkit-text-stroke:0.2px #222a40;">$40,000,000</span>
<span class="t" style="left:1173.25px;top:548.00px;font-size:10px;color:#222a40;transform:scaleX(0.9180);-webkit-text-stroke:0.2px #222a40;">$30,000,000</span>
<span class="t" style="left:1173.25px;top:588.00px;font-size:10px;color:#222a40;transform:scaleX(0.9180);-webkit-text-stroke:0.2px #222a40;">$20,000,000</span>
<div class="b" style="left:1235.80px;top:632.00px;width:639.40px;height:1.00px;background:#b5dcdd;"></div>
<span class="t" style="left:1173.25px;top:628.00px;font-size:10px;color:#222a40;transform:scaleX(0.9180);-webkit-text-stroke:0.2px #222a40;">$10,000,000</span>
<div class="b" style="left:1235.80px;top:672.00px;width:639.40px;height:1.00px;background:#b5dcdd;"></div>
<div class="b" style="left:1221.00px;top:671.50px;width:3.20px;height:1.10px;background:#333;"></div>
<span class="t" style="left:1468.75px;top:283.00px;font-size:16px;color:#17203a;font-weight:700;transform:scaleX(0.9600);">Annual EBITDA</span>
<div class="b" style="left:1251.45px;top:614.40px;width:32.50px;height:57.60px;background:#30084f;"></div>
<span class="t" style="left:1250.79px;top:599.00px;font-size:10.4px;color:#17203a;font-weight:700;transform:scaleX(0.9000);">$14.5 M</span>
<span class="t" style="left:1241.27px;top:681.20px;font-size:10px;font-weight:700;color:#17203a;line-height:11px;-webkit-text-stroke:0.2px #17203a;width:26.23px;transform-origin:100% 50%;transform:rotate(-30deg);"><span style="display:inline-block;transform-origin:0 50%;transform:scaleX(0.89);white-space:nowrap">Year 1</span></span>
<div class="b" style="left:1315.48px;top:536.55px;width:32.50px;height:135.45px;background:#30084f;"></div>
<span class="t" style="left:1314.82px;top:521.00px;font-size:10.4px;color:#17203a;font-weight:700;transform:scaleX(0.9000);">$34.1 M</span>
<span class="t" style="left:1305.30px;top:681.20px;font-size:10px;font-weight:700;color:#17203a;line-height:11px;-webkit-text-stroke:0.2px #17203a;width:26.23px;transform-origin:100% 50%;transform:rotate(-30deg);"><span style="display:inline-block;transform-origin:0 50%;transform:scaleX(0.89);white-space:nowrap">Year 2</span></span>
<div class="b" style="left:1379.51px;top:521.45px;width:32.50px;height:150.55px;background:#30084f;"></div>
<span class="t" style="left:1378.85px;top:506.00px;font-size:10.4px;color:#17203a;font-weight:700;transform:scaleX(0.9000);">$37.9 M</span>
<span class="t" style="left:1369.33px;top:681.20px;font-size:10px;font-weight:700;color:#17203a;line-height:11px;-webkit-text-stroke:0.2px #17203a;width:26.23px;transform-origin:100% 50%;transform:rotate(-30deg);"><span style="display:inline-block;transform-origin:0 50%;transform:scaleX(0.89);white-space:nowrap">Year 3</span></span>
<div class="b" style="left:1443.54px;top:504.37px;width:32.50px;height:167.63px;background:#30084f;"></div>
<span class="t" style="left:1442.88px;top:489.00px;font-size:10.4px;color:#17203a;font-weight:700;transform:scaleX(0.9000);">$42.2 M</span>
<span class="t" style="left:1433.36px;top:681.20px;font-size:10px;font-weight:700;color:#17203a;line-height:11px;-webkit-text-stroke:0.2px #17203a;width:26.23px;transform-origin:100% 50%;transform:rotate(-30deg);"><span style="display:inline-block;transform-origin:0 50%;transform:scaleX(0.89);white-space:nowrap">Year 4</span></span>
<div class="b" style="left:1507.57px;top:485.70px;width:32.50px;height:186.30px;background:#30084f;"></div>
<span class="t" style="left:1506.91px;top:471.00px;font-size:10.4px;color:#17203a;font-weight:700;transform:scaleX(0.9000);">$46.9 M</span>
<span class="t" style="left:1497.39px;top:681.20px;font-size:10px;font-weight:700;color:#17203a;line-height:11px;-webkit-text-stroke:0.2px #17203a;width:26.23px;transform-origin:100% 50%;transform:rotate(-30deg);"><span style="display:inline-block;transform-origin:0 50%;transform:scaleX(0.89);white-space:nowrap">Year 5</span></span>
<div class="b" style="left:1571.60px;top:465.05px;width:32.50px;height:206.95px;background:#30084f;"></div>
<span class="t" style="left:1570.94px;top:450.00px;font-size:10.4px;color:#17203a;font-weight:700;transform:scaleX(0.9000);">$52.1 M</span>
<span class="t" style="left:1561.42px;top:681.20px;font-size:10px;font-weight:700;color:#17203a;line-height:11px;-webkit-text-stroke:0.2px #17203a;width:26.23px;transform-origin:100% 50%;transform:rotate(-30deg);"><span style="display:inline-block;transform-origin:0 50%;transform:scaleX(0.89);white-space:nowrap">Year 6</span></span>
<div class="b" style="left:1635.63px;top:442.41px;width:32.50px;height:229.59px;background:#30084f;"></div>
<span class="t" style="left:1634.97px;top:427.00px;font-size:10.4px;color:#17203a;font-weight:700;transform:scaleX(0.9000);">$57.8 M</span>
<span class="t" style="left:1625.45px;top:681.20px;font-size:10px;font-weight:700;color:#17203a;line-height:11px;-webkit-text-stroke:0.2px #17203a;width:26.23px;transform-origin:100% 50%;transform:rotate(-30deg);"><span style="display:inline-block;transform-origin:0 50%;transform:scaleX(0.89);white-space:nowrap">Year 7</span></span>
<div class="b" style="left:1699.66px;top:417.38px;width:32.50px;height:254.62px;background:#30084f;"></div>
<span class="t" style="left:1699.00px;top:402.00px;font-size:10.4px;color:#17203a;font-weight:700;transform:scaleX(0.9000);">$64.1 M</span>
<span class="t" style="left:1689.48px;top:681.20px;font-size:10px;font-weight:700;color:#17203a;line-height:11px;-webkit-text-stroke:0.2px #17203a;width:26.23px;transform-origin:100% 50%;transform:rotate(-30deg);"><span style="display:inline-block;transform-origin:0 50%;transform:scaleX(0.89);white-space:nowrap">Year 8</span></span>
<div class="b" style="left:1763.69px;top:389.97px;width:32.50px;height:282.03px;background:#30084f;"></div>
<span class="t" style="left:1763.03px;top:375.00px;font-size:10.4px;color:#17203a;font-weight:700;transform:scaleX(0.9000);">$71.0 M</span>
<span class="t" style="left:1753.51px;top:681.20px;font-size:10px;font-weight:700;color:#17203a;line-height:11px;-webkit-text-stroke:0.2px #17203a;width:26.23px;transform-origin:100% 50%;transform:rotate(-30deg);"><span style="display:inline-block;transform-origin:0 50%;transform:scaleX(0.89);white-space:nowrap">Year 9</span></span>
<div class="b" style="left:1827.72px;top:359.78px;width:32.50px;height:312.22px;background:#30084f;"></div>
<span class="t" style="left:1827.06px;top:345.00px;font-size:10.4px;color:#17203a;font-weight:700;transform:scaleX(0.9000);">$78.6 M</span>
<span class="t" style="left:1812.59px;top:681.20px;font-size:10px;font-weight:700;color:#17203a;line-height:11px;-webkit-text-stroke:0.2px #17203a;width:31.18px;transform-origin:100% 50%;transform:rotate(-30deg);"><span style="display:inline-block;transform-origin:0 50%;transform:scaleX(0.89);white-space:nowrap">Year 10</span></span>
<div class="b" style="left:1900.00px;top:201.00px;width:20.00px;height:784.00px;background:#dadada;"></div>
<svg class="b" style="left:1904.00px;top:207.00px;" width="12" height="10" viewBox="0 0 12 10"><path d="M6 1.5 L11 8.5 L1 8.5 Z" fill="#2b2b2b"/></svg>
<svg class="b" style="left:1904.50px;top:974.50px;" width="12" height="10" viewBox="0 0 12 10"><path d="M1 1.5 L11 1.5 L6 8.5 Z" fill="#2b2b2b"/></svg>
<div class="b" style="left:1906.30px;top:608.00px;width:8.70px;height:362.00px;background:#2b2b2b;border-radius:4.4px;"></div>
<svg class="b" style="left:14.50px;top:14.50px;" width="16" height="16" viewBox="0 0 16 16"><path d="M2.6 0.5 H13.6 Q14.9 0.5 14.9 1.8 V5.6 H1.7 V1.6 Q1.7 0.5 2.6 0.5 Z" fill="#4fb848"/><path d="M2.8 5.4 H14.8 V14.2 Q14.8 15.4 13.6 15.4 H4 L2.8 14.2 Z" fill="#04300f"/><path d="M1.6 4.8 H8.4 V13.3 H2 L0.5 11.8 V5.9 Q0.5 4.8 1.6 4.8 Z" fill="#02170a"/><path d="M2.8 7.2 L6 11.2 M6 7.2 L2.8 11.2" stroke="#f0f6f2" stroke-width="1.25" fill="none"/></svg>
<span class="t" style="left:46.00px;top:18.00px;font-size:11px;color:#9a9a9a;transform:scaleX(0.8386);-webkit-text-stroke:0.12px #9a9a9a;">AutoSave</span>
<div class="b" style="left:93.30px;top:13.00px;width:40.70px;height:18.50px;background:#fff;border:1px solid #a8a8a8;border-radius:9.5px;"></div>
<div class="b" style="left:96.80px;top:16.20px;width:12.40px;height:12.40px;background:#8a8a8a;border-radius:6.5px;"></div>
<span class="t" style="left:115.00px;top:17.00px;font-size:11px;color:#9a9a9a;transform:scaleX(0.9192);-webkit-text-stroke:0.12px #9a9a9a;">Off</span>
<svg class="b" style="left:145.00px;top:14.00px;" width="18" height="18" viewBox="0 0 18 18"><g fill="none" stroke="#a4a4a4" stroke-width="1.2"><path d="M2 1.6 H13.2 L16.4 4.8 V16.4 H2 Z"/><path d="M5 1.6 V6.4 H12.4 V1.6"/><path d="M4.8 16.4 V10.4 H13.6 V16.4"/></g></svg>
<svg class="b" style="left:171.50px;top:14.00px;" width="18" height="18" viewBox="0 0 18 18"><g fill="none" stroke="#a4a4a4" stroke-width="1.3" stroke-linecap="round" stroke-linejoin="round"><path d="M2.5 3 V8.5 H8"/><path d="M2.8 8.3 C5 4 11 3 14 6.5 C16.5 9.5 14 13 9 16"/></g></svg>
<svg class="b" style="left:193.10px;top:20.10px" width="6.4" height="4.2" viewBox="-1 -1 6.4 4.2"><path d="M0 0 L2.2 2.2 L4.4 0" fill="none" stroke="#a4a4a4" stroke-width="1.1" stroke-linecap="round" stroke-linejoin="round"/></svg>
<svg class="b" style="left:207.50px;top:14.00px;" width="18" height="18" viewBox="0 0 18 18"><g fill="none" stroke="#a4a4a4" stroke-width="1.3" stroke-linecap="round" stroke-linejoin="round"><path d="M15.5 3 V8.5 H10"/><path d="M15.2 8.3 C13 4 7 3 4 6.5 C1.5 9.5 4 13 9 16"/></g></svg>
<svg class="b" style="left:229.00px;top:20.10px" width="6.4" height="4.2" viewBox="-1 -1 6.4 4.2"><path d="M0 0 L2.2 2.2 L4.4 0" fill="none" stroke="#a4a4a4" stroke-width="1.1" stroke-linecap="round" stroke-linejoin="round"/></svg>
<svg class="b" style="left:247.00px;top:17.00px;" width="10" height="10" viewBox="0 0 10 10"><g fill="none" stroke="#a4a4a4" stroke-width="1.1" stroke-linecap="round" stroke-linejoin="round"><path d="M2 3 H8"/><path d="M2.5 5.6 L5 8 L7.5 5.6"/></g></svg>
<span class="t" style="left:278.70px;top:17.00px;font-size:12px;color:#9a9a9a;transform:scaleX(0.9109);-webkit-text-stroke:0.12px #9a9a9a;">Battery Recycling Plant</span>
<svg class="b" style="left:396.00px;top:19.80px" width="10" height="6.0" viewBox="-1 -1 10 6.0"><path d="M0 0 L4.0 4.0 L8 0" fill="none" stroke="#a4a4a4" stroke-width="1.2" stroke-linecap="round" stroke-linejoin="round"/></svg>
<div class="b" style="left:794.70px;top:7.00px;width:345.50px;height:31.00px;background:#dcdcdc;border:1px solid #b4b4b4;border-radius:4.5px;border-bottom:1.5px solid #a2a2a2;"></div>
<svg class="b" style="left:807.00px;top:14.00px;" width="16" height="16" viewBox="0 0 16 16"><g fill="none" stroke="#a0a0a0" stroke-width="1.3" stroke-linecap="round"><circle cx="9.6" cy="6.4" r="4.4"/><path d="M6.4 9.8 L1.6 14.6"/></g></svg>
<span class="t" style="left:834.20px;top:15.00px;font-size:13px;color:#9a9a9a;transform:scaleX(0.9128);-webkit-text-stroke:0.12px #9a9a9a;">Search</span>
<div class="b" style="left:1750.60px;top:10.80px;width:23.40px;height:23.40px;background:#64221a;border-radius:12px;"></div>
<span class="t" style="left:1758.10px;top:19.00px;font-size:8px;color:#b4563a;transform:scaleX(0.9000);">JV</span>
<div class="b" style="left:1803.00px;top:21.50px;width:9.00px;height:1.10px;background:#b2b2b2;"></div>
<svg class="b" style="left:1846.00px;top:16.00px;" width="13" height="13" viewBox="0 0 13 13"><g fill="none" stroke="#ababab" stroke-width="1.1"><rect x="1.2" y="3.6" width="7.6" height="7.6" rx="1.6"/><path d="M3.6 3.4 V2.8 Q3.6 1.2 5.2 1.2 H9.6 Q11.6 1.2 11.6 3.2 V7.8 Q11.6 9.2 10.2 9.2 H9"/></g></svg>
<svg class="b" style="left:1892.00px;top:17.00px;" width="11" height="11" viewBox="0 0 11 11"><path d="M1 1 L10 10 M10 1 L1 10" stroke="#a6a6a6" stroke-width="1.1" fill="none"/></svg>
<span class="t" style="left:20.00px;top:54.00px;font-size:13.8px;color:#1f1f1f;transform:scaleX(0.8095);-webkit-text-stroke:0.3px #1f1f1f;">File</span>
<span class="t" style="left:63.30px;top:54.00px;font-size:13.8px;color:#1f1f1f;font-weight:700;transform:scaleX(0.9155);">Home</span>
<span class="t" style="left:116.70px;top:54.00px;font-size:13.8px;color:#1f1f1f;transform:scaleX(0.9069);-webkit-text-stroke:0.3px #1f1f1f;">Insert</span>
<span class="t" style="left:167.50px;top:54.00px;font-size:13.8px;color:#1f1f1f;transform:scaleX(0.8929);-webkit-text-stroke:0.3px #1f1f1f;">Page Layout</span>
<span class="t" style="left:256.70px;top:54.00px;font-size:13.8px;color:#1f1f1f;transform:scaleX(0.8972);-webkit-text-stroke:0.3px #1f1f1f;">Formulas</span>
<span class="t" style="left:326.70px;top:54.00px;font-size:13.8px;color:#1f1f1f;transform:scaleX(0.8954);-webkit-text-stroke:0.3px #1f1f1f;">Data</span>
<span class="t" style="left:373.00px;top:54.00px;font-size:13.8px;color:#1f1f1f;transform:scaleX(0.8619);-webkit-text-stroke:0.3px #1f1f1f;">Review</span>
<span class="t" style="left:431.30px;top:54.00px;font-size:13.8px;color:#1f1f1f;transform:scaleX(0.9102);-webkit-text-stroke:0.3px #1f1f1f;">View</span>
<span class="t" style="left:476.70px;top:54.00px;font-size:13.8px;color:#1f1f1f;transform:scaleX(0.9582);-webkit-text-stroke:0.3px #1f1f1f;">Automate</span>
<span class="t" style="left:552.50px;top:54.00px;font-size:13.8px;color:#1f1f1f;transform:scaleX(0.9093);-webkit-text-stroke:0.3px #1f1f1f;">Developer</span>
<span class="t" style="left:628.70px;top:54.00px;font-size:13.8px;color:#1f1f1f;transform:scaleX(0.9090);-webkit-text-stroke:0.3px #1f1f1f;">Help</span>
<span class="t" style="left:673.00px;top:54.00px;font-size:13.8px;color:#1f1f1f;transform:scaleX(0.9357);-webkit-text-stroke:0.3px #1f1f1f;">Acrobat</span>
<div class="b" style="left:63.00px;top:70.80px;width:36.80px;height:2.20px;background:#0f4a26;border-radius:1.1px;"></div>
<div class="b" style="left:1714.00px;top:48.80px;width:87.80px;height:22.20px;background:#fff;border:1px solid #a4a4a4;border-radius:4.5px;border-bottom-color:#8e8e8e;"></div>
<svg class="b" style="left:1718.50px;top:53.50px;" width="12" height="12" viewBox="0 0 12 12"><path d="M1.2 1.6 H10.2 V8 H4.6 L2.6 10 V8 H1.2 Z" fill="none" stroke="#222" stroke-width="1.1" stroke-linejoin="round"/></svg>
<span class="t" style="left:1734.00px;top:54.00px;font-size:13.6px;color:#111;transform:scaleX(0.9308);-webkit-text-stroke:0.3px #111;">Comments</span>
<div class="b" style="left:1809.60px;top:48.40px;width:67.70px;height:22.80px;background:#042b12;border-radius:4.5px;"></div>
<svg class="b" style="left:1813.00px;top:53.00px;" width="13" height="13" viewBox="0 0 13 13"><g fill="none" stroke="#c8e6d0" stroke-width="1.1" stroke-linejoin="round" stroke-linecap="round"><path d="M3.6 5.2 H1.6 V12 H10.4 V9.6"/><path d="M4.4 9.2 C4.6 6.4 6.4 4.8 8.6 4.6 V2.4 L11.8 5.6 L8.6 8.6 V6.6 C7 6.6 5.4 7.4 4.4 9.2 Z"/></g></svg>
<span class="t" style="left:1829.70px;top:54.00px;font-size:13.6px;color:#dcefe0;transform:scaleX(0.8680);">Share</span>
<svg class="b" style="left:1867.10px;top:57.95px" width="7" height="4.5" viewBox="-1 -1 7 4.5"><path d="M0 0 L2.5 2.5 L5 0" fill="none" stroke="#d8ecde" stroke-width="1.1" stroke-linecap="round" stroke-linejoin="round"/></svg>
<svg class="b" style="left:1889.00px;top:51.00px;" width="18" height="18" viewBox="0 0 18 18"><g fill="none" stroke="#222" stroke-width="1.4" stroke-linejoin="round" stroke-linecap="round"><circle cx="7" cy="8.2" r="3"/><path d="M1.6 16.4 C2 12.6 4.4 11.6 7 11.6 C9.6 11.6 12 12.6 12.4 16.4"/><path d="M6.4 3.8 V1.6 H16.6 V8.6 H14.4 L12.6 10.4 V8.6"/></g></svg>
<div class="b" style="left:7.90px;top:176.20px;width:285.30px;height:21.20px;background:#fff;border-radius:4.5px;box-shadow:0 0 0 0.7px #cdcdcd;"></div>
<span class="t" style="left:13.00px;top:181.00px;font-size:12.6px;color:#1a1a1a;transform:scaleX(0.9604);-webkit-text-stroke:0.3px #1a1a1a;">N39</span>
<svg class="b" style="left:278.50px;top:185.05px" width="10.6" height="6.3" viewBox="-1 -1 10.6 6.3"><path d="M0 0 L4.3 4.3 L8.6 0" fill="none" stroke="#222" stroke-width="1.5" stroke-linecap="round" stroke-linejoin="round"/></svg>
<div class="b" style="left:302.50px;top:182.60px;width:2.10px;height:2.20px;background:#1c1c1c;border-radius:0.4px;"></div>
<div class="b" style="left:302.50px;top:186.20px;width:2.10px;height:2.20px;background:#1c1c1c;border-radius:0.4px;"></div>
<div class="b" style="left:302.50px;top:189.80px;width:2.10px;height:2.20px;background:#1c1c1c;border-radius:0.4px;"></div>
<div class="b" style="left:313.90px;top:176.20px;width:78.30px;height:21.20px;background:#fff;border-radius:4.5px;box-shadow:0 0 0 0.7px #cdcdcd;"></div>
<svg class="b" style="left:318.00px;top:180.50px;" width="13" height="13" viewBox="0 0 13 13"><path d="M1.6 1.6 L11.4 11.4 M11.4 1.6 L1.6 11.4" stroke="#8c8c8c" stroke-width="1.2" fill="none"/></svg>
<svg class="b" style="left:339.00px;top:180.00px;" width="16" height="13" viewBox="0 0 16 13"><path d="M1.4 8.2 L5 11.6 L14.6 1.6" stroke="#8c8c8c" stroke-width="1.2" fill="none"/></svg>
<span class="t" style="left:363.2px;top:176.6px;font-family:'Liberation Serif',serif;font-style:italic;font-weight:700;font-size:16.5px;color:#111;letter-spacing:-0.6px;line-height:18px;">fx</span>
<svg class="b" style="left:381.00px;top:184.40px" width="10" height="6.0" viewBox="-1 -1 10 6.0"><path d="M0 0 L4.0 4.0 L8 0" fill="none" stroke="#777" stroke-width="1.2" stroke-linecap="round" stroke-linejoin="round"/></svg>
<div class="b" style="left:397.50px;top:176.20px;width:1514.70px;height:21.20px;background:#fff;border-radius:4.5px;box-shadow:0 0 0 0.7px #cdcdcd;"></div>
<svg class="b" style="left:1898.40px;top:183.15px" width="10.6" height="6.3" viewBox="-1 -1 10.6 6.3"><path d="M0 0 L4.3 4.3 L8.6 0" fill="none" stroke="#222" stroke-width="1.5" stroke-linecap="round" stroke-linejoin="round"/></svg>
<div class="b" style="left:7.50px;top:74.80px;width:1904.80px;height:93.60px;background:#fff;border-radius:8.5px;box-shadow:0 1.4px 1.6px rgba(0,0,0,0.34);"></div>
<svg class="b" style="left:26.10px;top:80.90px;" width="28" height="31" viewBox="0 0 28 31"><path d="M18.8 12 V6.6 H3.2 V25.6 H13.2" fill="none" stroke="#ea640c" stroke-width="3.2" stroke-linejoin="miter"/><path d="M18.2 12 V7.6 H4.3 V24.5 H13.2" fill="none" stroke="#ffc21c" stroke-width="1.1"/><path d="M1.6 26.9 H13.2" stroke="#c4300c" stroke-width="0.9"/><path d="M1.8 5.3 H4.8 M17.2 5.3 H20.2" stroke="#e83a2a" stroke-width="1"/><path d="M5.6 8.6 V5.2 H7.6 C8.2 5.2 8.6 4.8 8.8 4.2 C9.4 1 12.8 1 13.4 4.2 C13.6 4.8 14 5.2 14.6 5.2 H16.8 V8.6 Z" fill="#fff" stroke="#484848" stroke-width="1.3" stroke-linejoin="round"/><rect x="13.9" y="12.8" width="12.4" height="16" fill="#fff" stroke="#2e2e2e" stroke-width="1.5"/></svg>
<span class="t" style="left:25.80px;top:116.00px;font-size:12.3px;color:#1f1f1f;transform:scaleX(0.7980);-webkit-text-stroke:0.3px #1f1f1f;">Paste</span>
<svg class="b" style="left:34.70px;top:134.25px" width="6.6" height="4.3" viewBox="-1 -1 6.6 4.3"><path d="M0 0 L2.3 2.3 L4.6 0" fill="none" stroke="#222" stroke-width="1.2" stroke-linecap="round" stroke-linejoin="round"/></svg>
<svg class="b" style="left:64.20px;top:81.00px;" width="12" height="17" viewBox="0 0 12 17"><path d="M2.8 0.8 L8.6 12 M9 0.8 L3.2 12" stroke="#333" stroke-width="1.25" fill="none"/><circle cx="3.2" cy="13.5" r="2.1" fill="#0c4fc6"/><circle cx="8.8" cy="13.5" r="2.1" fill="#0c4fc6"/><circle cx="3.2" cy="13.5" r="0.6" fill="#9fc4f4"/><circle cx="8.8" cy="13.5" r="0.6" fill="#9fc4f4"/></svg>
<span class="t" style="left:81.70px;top:84.00px;font-size:12.3px;color:#1f1f1f;transform:scaleX(0.8725);-webkit-text-stroke:0.3px #1f1f1f;">Cut</span>
<svg class="b" style="left:62.00px;top:104.80px;" width="16" height="17" viewBox="0 0 16 17"><path d="M6.6 13.6 H1.2 V1 H6.2 L7.4 2.6" fill="none" stroke="#2e2e2e" stroke-width="1.4" stroke-linejoin="round"/><path d="M7 3.8 H11.6 L14.8 7 V16.2 H7 Z" fill="#fff" stroke="#2e2e2e" stroke-width="1.4" stroke-linejoin="round"/><path d="M11.4 4 V7.2 H14.6" fill="none" stroke="#2e2e2e" stroke-width="1.1"/><path d="M8.8 10 H13 M8.8 11.9 H13 M8.8 13.8 H13" stroke="#555" stroke-width="0.9"/></svg>
<span class="t" style="left:81.70px;top:108.00px;font-size:12.3px;color:#1f1f1f;transform:scaleX(0.9020);-webkit-text-stroke:0.3px #1f1f1f;">Copy</span>
<svg class="b" style="left:123.70px;top:111.65px" width="6.6" height="4.3" viewBox="-1 -1 6.6 4.3"><path d="M0 0 L2.3 2.3 L4.6 0" fill="none" stroke="#222" stroke-width="1.2" stroke-linecap="round" stroke-linejoin="round"/></svg>
<svg class="b" style="left:62.50px;top:129.00px;" width="17" height="17" viewBox="0 0 17 17"><path d="M1.2 8.4 L6.6 5.2 L12.2 10.6 L6.6 14.8 Z" fill="#fff" stroke="#e4480e" stroke-width="1.5" stroke-linejoin="round"/><path d="M3 10.2 L9.6 11.6 L6.6 14.4 Z" fill="#f28a1c"/><path d="M6.4 4.4 L9.6 1.8 L13.8 6.6 L11 9.4 Z" fill="#555" stroke="#2a2a2a" stroke-width="1.2" stroke-linejoin="round"/><path d="M11.8 3.6 L14.6 1.2" stroke="#2a2a2a" stroke-width="2.2" stroke-linecap="round"/><path d="M8.2 4.6 L11.4 8 M9.6 3.4 L12.6 6.8" stroke="#d8d8d8" stroke-width="0.5"/></svg>
<span class="t" style="left:81.70px;top:132.00px;font-size:12.3px;color:#1f1f1f;transform:scaleX(0.8864);-webkit-text-stroke:0.3px #1f1f1f;">Format Painter</span>
<span class="t" style="left:60.80px;top:153.00px;font-size:10.8px;color:#1f1f1f;transform:scaleX(0.9345);-webkit-text-stroke:0.3px #1f1f1f;">Clipboard</span>
<svg class="b" style="left:159.00px;top:155.00px;" width="8" height="8" viewBox="0 0 8 8"><g fill="none" stroke="#222" stroke-width="1.25"><path d="M0.7 5.2 V0.7 H5.2"/><path d="M2.8 2.8 L7.2 7.2 M7.3 3.4 V7.3 H3.4"/></g></svg>
<div class="b" style="left:169.40px;top:79.50px;width:1.20px;height:83.10px;background:#d2d2d2;"></div>
<div class="b" style="left:178.00px;top:85.20px;width:106.50px;height:22.50px;background:#fff;border:1px solid #7d7d7d;border-radius:3.5px;"></div>
<span class="t" style="left:180.20px;top:91.00px;font-size:12.3px;color:#111;transform:scaleX(0.9237);-webkit-text-stroke:0.3px #111;">Calibri</span>
<svg class="b" style="left:275.70px;top:95.05px" width="6.6" height="4.3" viewBox="-1 -1 6.6 4.3"><path d="M0 0 L2.3 2.3 L4.6 0" fill="none" stroke="#222" stroke-width="1.2" stroke-linecap="round" stroke-linejoin="round"/></svg>
<div class="b" style="left:286.80px;top:85.20px;width:46.80px;height:22.50px;background:#fff;border:1px solid #7d7d7d;border-radius:3.5px;"></div>
<span class="t" style="left:289.60px;top:91.00px;font-size:12.3px;color:#111;transform:scaleX(0.8458);-webkit-text-stroke:0.3px #111;">11</span>
<svg class="b" style="left:324.70px;top:95.05px" width="6.6" height="4.3" viewBox="-1 -1 6.6 4.3"><path d="M0 0 L2.3 2.3 L4.6 0" fill="none" stroke="#222" stroke-width="1.2" stroke-linecap="round" stroke-linejoin="round"/></svg>
<span class="t" style="left:340.00px;top:88.00px;font-size:15.5px;color:#222;transform:scaleX(0.9673);-webkit-text-stroke:0.3px #222;">A</span>
<svg class="b" style="left:349.50px;top:89.50px;" width="6" height="5" viewBox="0 0 6 5"><path d="M0.8 3.8 L3 1.2 L5.2 3.8" fill="none" stroke="#1e5fd0" stroke-width="1.2"/></svg>
<span class="t" style="left:365.40px;top:91.00px;font-size:12.5px;color:#222;transform:scaleX(0.9595);-webkit-text-stroke:0.3px #222;">A</span>
<svg class="b" style="left:373.00px;top:89.50px;" width="6" height="5" viewBox="0 0 6 5"><path d="M0.8 1.2 L3 3.8 L5.2 1.2" fill="none" stroke="#1e5fd0" stroke-width="1.2"/></svg>
<span class="t" style="left:185.60px;top:119.00px;font-size:13px;color:#111;font-weight:700;transform:scaleX(0.7776);">B</span>
<span class="t" style="left:209.6px;top:117.6px;font-family:'Liberation Serif',serif;font-style:italic;font-size:15px;color:#111;line-height:17px;">I</span>
<span class="t" style="left:232.30px;top:120.00px;font-size:12.2px;color:#111;transform:scaleX(0.9421);-webkit-text-stroke:0.3px #111;">U</span>
<div class="b" style="left:232.30px;top:131.40px;width:8.40px;height:1.20px;background:#222;"></div>
<svg class="b" style="left:251.10px;top:124.75px" width="6.6" height="4.3" viewBox="-1 -1 6.6 4.3"><path d="M0 0 L2.3 2.3 L4.6 0" fill="none" stroke="#222" stroke-width="1.2" stroke-linecap="round" stroke-linejoin="round"/></svg>
<div class="b" style="left:263.90px;top:115.60px;width:1.20px;height:22.00px;background:#d2d2d2;"></div>
<svg class="b" style="left:269.50px;top:118.50px;" width="16" height="16" viewBox="0 0 16 16"><g fill="none" stroke="#555" stroke-width="1"><path d="M1 1 H14.6 V14 H1 Z" stroke-dasharray="1 1"/><path d="M7.8 1 V14 M1 7.6 H14.6"/></g><path d="M0.6 14.6 H15" stroke="#222" stroke-width="1.6"/></svg>
<svg class="b" style="left:291.70px;top:124.75px" width="6.6" height="4.3" viewBox="-1 -1 6.6 4.3"><path d="M0 0 L2.3 2.3 L4.6 0" fill="none" stroke="#222" stroke-width="1.2" stroke-linecap="round" stroke-linejoin="round"/></svg>
<div class="b" style="left:304.40px;top:115.60px;width:1.20px;height:22.00px;background:#d2d2d2;"></div>
<svg class="b" style="left:311.50px;top:118.50px;" width="14" height="12" viewBox="0 0 14 12"><path d="M5.6 1 L10.4 5.8 L5.8 10.2 L1.4 6 Z" fill="#fff" stroke="#333" stroke-width="1.2" stroke-linejoin="round"/><path d="M5 1.8 L7 0.6" stroke="#333" stroke-width="1.1"/><path d="M10.6 4.4 C12.4 5.2 12.6 7.6 12.2 9" stroke="#1e5fd0" stroke-width="1.5" fill="none"/></svg>
<div class="b" style="left:310.60px;top:130.60px;width:15.00px;height:3.40px;background:#fff799;"></div>
<svg class="b" style="left:332.10px;top:124.75px" width="6.6" height="4.3" viewBox="-1 -1 6.6 4.3"><path d="M0 0 L2.3 2.3 L4.6 0" fill="none" stroke="#222" stroke-width="1.2" stroke-linecap="round" stroke-linejoin="round"/></svg>
<span class="t" style="left:351.20px;top:118.00px;font-size:13.6px;color:#222;transform:scaleX(1.1134);-webkit-text-stroke:0.3px #222;">A</span>
<div class="b" style="left:348.40px;top:130.10px;width:15.70px;height:4.30px;background:#3232f0;"></div>
<svg class="b" style="left:370.50px;top:124.75px" width="6.6" height="4.3" viewBox="-1 -1 6.6 4.3"><path d="M0 0 L2.3 2.3 L4.6 0" fill="none" stroke="#222" stroke-width="1.2" stroke-linecap="round" stroke-linejoin="round"/></svg>
<span class="t" style="left:261.90px;top:153.00px;font-size:10.8px;color:#1f1f1f;transform:scaleX(0.8699);-webkit-text-stroke:0.3px #1f1f1f;">Font</span>
<svg class="b" style="left:378.00px;top:155.00px;" width="8" height="8" viewBox="0 0 8 8"><g fill="none" stroke="#222" stroke-width="1.25"><path d="M0.7 5.2 V0.7 H5.2"/><path d="M2.8 2.8 L7.2 7.2 M7.3 3.4 V7.3 H3.4"/></g></svg>
<div class="b" style="left:388.40px;top:79.50px;width:1.20px;height:83.10px;background:#d2d2d2;"></div>
<svg class="b" style="left:400.50px;top:88.50px;" width="15" height="10" viewBox="0 0 15 10"><g stroke="#333" stroke-width="1.5"><path d="M0.6 1 H14.4 M2.6 4.6 H12.4 M0.6 8.2 H14.4"/></g></svg>
<svg class="b" style="left:424.50px;top:91.50px;" width="15" height="10" viewBox="0 0 15 10"><g stroke="#333" stroke-width="1.5"><path d="M0.6 1 H14.4 M2.6 4.6 H12.4 M0.6 8.2 H14.4"/></g></svg>
<div class="b" style="left:445.00px;top:85.20px;width:22.20px;height:22.60px;background:#d4d4d4;border:1px solid #7a7a7a;border-radius:3.5px;"></div>
<svg class="b" style="left:448.80px;top:94.50px;" width="15" height="10" viewBox="0 0 15 10"><g stroke="#333" stroke-width="1.5"><path d="M0.6 1 H14.4 M2.6 4.6 H12.4 M0.6 8.2 H14.4"/></g></svg>
<div class="b" style="left:468.40px;top:85.40px;width:1.20px;height:22.40px;background:#d2d2d2;"></div>
<svg class="b" style="left:474.50px;top:88.50px;" width="17" height="16" viewBox="0 0 17 16"><path d="M2 13.6 L13.4 3.4 M13.6 7.4 V3.2 H9.4" fill="none" stroke="#1e6fd9" stroke-width="1.3"/><text x="0" y="0" font-size="9.4" font-weight="700" font-family="Liberation Sans, sans-serif" fill="#333" transform="translate(0.6 9.4) rotate(-45) scale(0.9 1)">ab</text></svg>
<svg class="b" style="left:494.90px;top:94.65px" width="6.6" height="4.3" viewBox="-1 -1 6.6 4.3"><path d="M0 0 L2.3 2.3 L4.6 0" fill="none" stroke="#222" stroke-width="1.2" stroke-linecap="round" stroke-linejoin="round"/></svg>
<svg class="b" style="left:400.50px;top:119.50px;" width="15" height="14" viewBox="0 0 15 14"><g stroke="#333" stroke-width="1.5"><path d="M0.6 1 H14.4 M0.6 4.6 H10.4 M0.6 8.2 H14.4 M0.6 11.8 H10.4"/></g></svg>
<svg class="b" style="left:424.50px;top:119.50px;" width="15" height="14" viewBox="0 0 15 14"><g stroke="#333" stroke-width="1.5"><path d="M0.6 1 H14.4 M2.6 4.6 H12.4 M0.6 8.2 H14.4 M2.6 11.8 H12.4"/></g></svg>
<svg class="b" style="left:448.50px;top:119.50px;" width="15" height="14" viewBox="0 0 15 14"><g stroke="#333" stroke-width="1.5"><path d="M0.6 1 H14.4 M4.6 4.6 H14.4 M0.6 8.2 H14.4 M4.6 11.8 H14.4"/></g></svg>
<div class="b" style="left:468.40px;top:115.60px;width:1.20px;height:22.00px;background:#d2d2d2;"></div>
<svg class="b" style="left:474.50px;top:119.50px;" width="15" height="14" viewBox="0 0 15 14"><g stroke="#333" stroke-width="1.5"><path d="M0.6 1 H14.4 M8 4.6 H14.4 M8 8.2 H14.4 M0.6 11.8 H14.4"/></g><path d="M6 6.4 H1 M3 4.4 L1 6.4 L3 8.4" fill="none" stroke="#1e6fd9" stroke-width="1.3"/></svg>
<svg class="b" style="left:498.50px;top:119.50px;" width="15" height="14" viewBox="0 0 15 14"><g stroke="#333" stroke-width="1.5"><path d="M0.6 1 H14.4 M8 4.6 H14.4 M8 8.2 H14.4 M0.6 11.8 H14.4"/></g><path d="M0.6 6.4 H5.6 M3.6 4.4 L5.6 6.4 L3.6 8.4" fill="none" stroke="#1e6fd9" stroke-width="1.3"/></svg>
<div class="b" style="left:522.40px;top:85.40px;width:1.20px;height:57.00px;background:#d2d2d2;"></div>
<svg class="b" style="left:533.50px;top:88.00px;" width="15" height="18" viewBox="0 0 15 18"><text x="0.6" y="7.6" font-size="9.4" font-family="Liberation Sans, sans-serif" fill="#222" stroke="#222" stroke-width="0.3">ab</text><text x="0.6" y="15.2" font-size="9.4" font-family="Liberation Sans, sans-serif" fill="#222" stroke="#222" stroke-width="0.3">c</text><path d="M11.6 8 C14.4 9 14.4 13.4 11 13.4 H7.4 M9.2 11.4 L7.2 13.4 L9.2 15.4" fill="none" stroke="#1e6fd9" stroke-width="1.3"/></svg>
<span class="t" style="left:552.00px;top:92.00px;font-size:12.3px;color:#1f1f1f;transform:scaleX(0.9068);-webkit-text-stroke:0.3px #1f1f1f;">Wrap Text</span>
<svg class="b" style="left:531.50px;top:119.00px;" width="17" height="16" viewBox="0 0 17 16"><rect x="1" y="1" width="14.4" height="13.4" fill="#fff" stroke="#444" stroke-width="1.2"/><rect x="1.6" y="4.4" width="13.2" height="6.6" fill="#d6e6fb" stroke="#1e6fd9" stroke-width="1.1"/><path d="M8.2 1 V4 M8.2 11.4 V14.4" stroke="#444" stroke-width="1.1"/><path d="M3.4 7.7 H13 M5.2 6 L3.4 7.7 L5.2 9.4 M11.2 6 L13 7.7 L11.2 9.4" fill="none" stroke="#1e5fd0" stroke-width="1.1"/></svg>
<span class="t" style="left:552.00px;top:122.00px;font-size:12.3px;color:#1f1f1f;transform:scaleX(0.9099);-webkit-text-stroke:0.3px #1f1f1f;">Merge &amp; Center</span>
<svg class="b" style="left:647.20px;top:124.75px" width="6.6" height="4.3" viewBox="-1 -1 6.6 4.3"><path d="M0 0 L2.3 2.3 L4.6 0" fill="none" stroke="#222" stroke-width="1.2" stroke-linecap="round" stroke-linejoin="round"/></svg>
<span class="t" style="left:499.70px;top:153.00px;font-size:10.8px;color:#1f1f1f;transform:scaleX(0.9016);-webkit-text-stroke:0.3px #1f1f1f;">Alignment</span>
<svg class="b" style="left:658.00px;top:155.00px;" width="8" height="8" viewBox="0 0 8 8"><g fill="none" stroke="#222" stroke-width="1.25"><path d="M0.7 5.2 V0.7 H5.2"/><path d="M2.8 2.8 L7.2 7.2 M7.3 3.4 V7.3 H3.4"/></g></svg>
<div class="b" style="left:669.10px;top:79.50px;width:1.20px;height:83.10px;background:#d2d2d2;"></div>
<div class="b" style="left:677.40px;top:85.20px;width:134.80px;height:22.50px;background:#fff;border:1px solid #7d7d7d;border-radius:3.5px;"></div>
<span class="t" style="left:680.20px;top:91.00px;font-size:12.3px;color:#111;transform:scaleX(0.8455);-webkit-text-stroke:0.3px #111;">General</span>
<svg class="b" style="left:803.30px;top:95.05px" width="6.6" height="4.3" viewBox="-1 -1 6.6 4.3"><path d="M0 0 L2.3 2.3 L4.6 0" fill="none" stroke="#222" stroke-width="1.2" stroke-linecap="round" stroke-linejoin="round"/></svg>
<span class="t" style="left:683.90px;top:119.00px;font-size:16px;color:#222;transform:scaleX(0.9103);-webkit-text-stroke:0.3px #222;">$</span>
<svg class="b" style="left:702.70px;top:124.75px" width="6.6" height="4.3" viewBox="-1 -1 6.6 4.3"><path d="M0 0 L2.3 2.3 L4.6 0" fill="none" stroke="#222" stroke-width="1.2" stroke-linecap="round" stroke-linejoin="round"/></svg>
<span class="t" style="left:719.60px;top:119.00px;font-size:16px;color:#222;transform:scaleX(1.0263);-webkit-text-stroke:0.3px #222;">%</span>
<svg class="b" style="left:745.50px;top:119.50px;" width="11" height="15" viewBox="0 0 11 15"><path d="M5.6 1.4 C7.8 1.4 9 3 9 5.4 C9 8.6 6.8 11.2 3.2 12.6 L2.6 11.6 C4.8 10.4 6 9 6.2 7.4 C4.2 7.6 2.8 6.4 2.8 4.4 C2.8 2.6 4 1.4 5.6 1.4 Z" fill="#222"/></svg>
<div class="b" style="left:763.10px;top:115.60px;width:1.20px;height:22.00px;background:#d2d2d2;"></div>
<svg class="b" style="left:768.30px;top:119.00px;" width="17" height="16" viewBox="0 0 17 16"><path d="M7.6 4.2 H1.2 M3.6 1.8 L1.2 4.2 L3.6 6.6" fill="none" stroke="#1e5fd0" stroke-width="1.4"/><text x="8.8" y="7" font-size="9" font-family="Liberation Sans, sans-serif" fill="#222" stroke="#222" stroke-width="0.25" textLength="5.2" lengthAdjust="spacingAndGlyphs">0</text><text x="2.6" y="14.4" font-size="9" font-family="Liberation Sans, sans-serif" fill="#222" stroke="#222" stroke-width="0.25" textLength="12.6" lengthAdjust="spacingAndGlyphs">.00</text></svg>
<svg class="b" style="left:792.30px;top:119.00px;" width="17" height="16" viewBox="0 0 17 16"><path d="M0.4 11.2 H6.8 M4.4 8.8 L6.8 11.2 L4.4 13.6" fill="none" stroke="#1e5fd0" stroke-width="1.4"/><text x="2.6" y="7" font-size="9" font-family="Liberation Sans, sans-serif" fill="#222" stroke="#222" stroke-width="0.25" textLength="12.6" lengthAdjust="spacingAndGlyphs">.00</text><text x="7.4" y="14.4" font-size="9" font-family="Liberation Sans, sans-serif" fill="#222" stroke="#222" stroke-width="0.25" textLength="8" lengthAdjust="spacingAndGlyphs">.0</text></svg>
<span class="t" style="left:718.70px;top:153.00px;font-size:10.8px;color:#1f1f1f;transform:scaleX(0.9398);-webkit-text-stroke:0.3px #1f1f1f;">Number</span>
<svg class="b" style="left:808.00px;top:155.00px;" width="8" height="8" viewBox="0 0 8 8"><g fill="none" stroke="#222" stroke-width="1.25"><path d="M0.7 5.2 V0.7 H5.2"/><path d="M2.8 2.8 L7.2 7.2 M7.3 3.4 V7.3 H3.4"/></g></svg>
<div class="b" style="left:818.90px;top:79.50px;width:1.20px;height:83.10px;background:#d2d2d2;"></div>
<svg class="b" style="left:847.50px;top:84.50px;" width="28" height="23" viewBox="0 0 28 23"><rect x="1" y="1" width="26" height="20.6" fill="#fff" stroke="#2a2a2a" stroke-width="1.5"/><rect x="6.4" y="2" width="11.6" height="5.4" fill="#ee5a50"/><rect x="6.4" y="8.6" width="7" height="5.4" fill="#2b6fd6"/><rect x="6.4" y="15.2" width="13.6" height="5.4" fill="#ee5a50"/><path d="M5.8 1 V21.6 M21.4 1 V21.6 M1 7.9 H27 M1 14.6 H27" stroke="#2a2a2a" stroke-width="1.4" fill="none"/></svg>
<span class="t" style="left:833.00px;top:115.00px;font-size:12.3px;color:#1f1f1f;transform:scaleX(0.9424);-webkit-text-stroke:0.3px #1f1f1f;">Conditional</span>
<span class="t" style="left:829.70px;top:130.00px;font-size:12.3px;color:#1f1f1f;transform:scaleX(0.9237);-webkit-text-stroke:0.3px #1f1f1f;">Formatting</span>
<svg class="b" style="left:887.40px;top:132.30px" width="6.4" height="4.2" viewBox="-1 -1 6.4 4.2"><path d="M0 0 L2.2 2.2 L4.4 0" fill="none" stroke="#222" stroke-width="1.2" stroke-linecap="round" stroke-linejoin="round"/></svg>
<svg class="b" style="left:910.50px;top:84.50px;" width="30" height="27" viewBox="0 0 30 27"><rect x="1" y="1" width="26" height="20.6" fill="#fff" stroke="#2a2a2a" stroke-width="1.5"/><rect x="10" y="8" width="16.6" height="13.2" fill="#2b6fd6"/><path d="M9.6 1 V21.6 M18.4 1 V21.6 M1 7.9 H27 M1 14.6 H27" stroke="#2a2a2a" stroke-width="1.4" fill="none"/><path d="M29 7.4 L20.4 19.4 L17.4 17 L26.6 5.4 C27.8 4 30 5.8 29 7.4 Z" fill="#fff" stroke="#2a2a2a" stroke-width="1.3" stroke-linejoin="round"/><path d="M19.8 19.6 C19.4 23.6 14.6 25.6 9.6 24.6 C12.4 23.4 12.8 21.2 14.2 18.6 C15.8 16.6 19.4 17.2 19.8 19.6 Z" fill="#1e5fd0"/></svg>
<span class="t" style="left:901.00px;top:115.00px;font-size:12.3px;color:#1f1f1f;transform:scaleX(0.8815);-webkit-text-stroke:0.3px #1f1f1f;">Format as</span>
<span class="t" style="left:907.50px;top:130.00px;font-size:12.3px;color:#1f1f1f;transform:scaleX(0.8672);-webkit-text-stroke:0.3px #1f1f1f;">Table</span>
<svg class="b" style="left:936.40px;top:132.30px" width="6.4" height="4.2" viewBox="-1 -1 6.4 4.2"><path d="M0 0 L2.2 2.2 L4.4 0" fill="none" stroke="#222" stroke-width="1.2" stroke-linecap="round" stroke-linejoin="round"/></svg>
<div class="b" style="left:954.60px;top:85.20px;width:301.40px;height:58.20px;background:#fff;border:1px solid #c4c4c4;border-radius:4px;border-right:none;border-top-right-radius:0;border-bottom-right-radius:0;"></div>
<div class="b" style="left:955.80px;top:88.20px;width:99.00px;height:26.60px;background:#fff;border:1.6px solid #5a5a5a;box-shadow:inset 0 0 0 1.3px #d8d8d8;"></div>
<span class="t" style="left:962.50px;top:95.00px;font-size:13.2px;color:#000;transform:scaleX(0.9615);-webkit-text-stroke:0.3px #000;">Normal</span>
<div class="b" style="left:1058.30px;top:91.00px;width:93.70px;height:20.80px;background:#ff9a9a;"></div>
<span class="t" style="left:1062.40px;top:95.00px;font-size:13.2px;color:#9c0006;transform:scaleX(0.8771);-webkit-text-stroke:0.3px #9c0006;">Bad</span>
<div class="b" style="left:1158.00px;top:91.00px;width:93.80px;height:20.80px;background:#9cdb9c;"></div>
<span class="t" style="left:1161.80px;top:95.00px;font-size:13.2px;color:#064f06;transform:scaleX(0.9167);-webkit-text-stroke:0.3px #064f06;">Good</span>
<div class="b" style="left:958.30px;top:118.00px;width:93.90px;height:20.80px;background:#ffd84f;"></div>
<span class="t" style="left:962.60px;top:122.00px;font-size:13.2px;color:#7f4405;transform:scaleX(0.9588);-webkit-text-stroke:0.3px #7f4405;">Neutral</span>
<div class="b" style="left:1058.30px;top:118.00px;width:93.70px;height:20.80px;background:#dcdcdc;border:1px solid #6e6e6e;"></div>
<span class="t" style="left:1062.20px;top:122.00px;font-size:13px;color:#f44a0c;font-weight:700;transform:scaleX(0.8906);">Calculation</span>
<div class="b" style="left:1158.00px;top:118.00px;width:93.80px;height:20.80px;background:#666;border:1.6px solid #2e2e2e;box-shadow:inset 0 0 0 1px #8a8a8a;"></div>
<span class="t" style="left:1162.20px;top:122.00px;font-size:13px;color:#fff;font-weight:700;transform:scaleX(0.8635);">Check Cell</span>
<div class="b" style="left:1255.20px;top:85.30px;width:22.40px;height:58.20px;background:#fff;border:1px solid #6a6a6a;border-radius:4px;"></div>
<svg class="b" style="left:1262.00px;top:110.00px;" width="9" height="9" viewBox="0 0 9 9"><g fill="none" stroke="#222" stroke-width="1.1"><path d="M1 1.6 H8"/><path d="M1.6 4.4 L4.5 7.2 L7.4 4.4"/></g></svg>
<span class="t" style="left:1040.80px;top:154.00px;font-size:10.8px;color:#1f1f1f;transform:scaleX(0.8364);-webkit-text-stroke:0.3px #1f1f1f;">Styles</span>
<div class="b" style="left:1287.40px;top:79.50px;width:1.20px;height:83.10px;background:#d2d2d2;"></div>
<svg class="b" style="left:1300.00px;top:84.50px;" width="32" height="23" viewBox="0 0 32 23"><g transform="translate(2.2 0)"><rect x="1" y="1" width="25.4" height="20" fill="#fff" stroke="#2a2a2a" stroke-width="1.5"/><path d="M9.4 1 V21 M18 1 V21 M1 7.6 H26.4 M1 14.4 H26.4" stroke="#2a2a2a" stroke-width="1.4" fill="none"/></g><rect x="9" y="8" width="21.6" height="6.4" fill="#2b6fd6"/><path d="M20.6 8 V14.4" stroke="#1a4fae" stroke-width="1"/><path d="M9.6 8.2 H6.2 V5.6 L0.8 11.2 L6.2 16.8 V14.2 H9.6 Z" fill="#e8f1fd" stroke="#2b6fd6" stroke-width="1.3" stroke-linejoin="round"/></svg>
<span class="t" style="left:1302.00px;top:116.00px;font-size:12.3px;color:#1f1f1f;transform:scaleX(0.8777);-webkit-text-stroke:0.3px #1f1f1f;">Insert</span>
<svg class="b" style="left:1311.70px;top:134.05px" width="6.6" height="4.3" viewBox="-1 -1 6.6 4.3"><path d="M0 0 L2.3 2.3 L4.6 0" fill="none" stroke="#222" stroke-width="1.2" stroke-linecap="round" stroke-linejoin="round"/></svg>
<svg class="b" style="left:1341.50px;top:84.50px;" width="32" height="23" viewBox="0 0 32 23"><rect x="1" y="1" width="25.4" height="20" fill="#fff" stroke="#2a2a2a" stroke-width="1.5"/><path d="M9.4 1 V21 M18 1 V21 M1 7.6 H26.4 M1 14.4 H26.4" stroke="#2a2a2a" stroke-width="1.4" fill="none"/><rect x="4.4" y="8" width="11" height="6.4" fill="#2b6fd6"/><path d="M9.4 8 V14.4" stroke="#1a4fae" stroke-width="1"/><path d="M15 6.2 L20 11.2 L15 16.2 Z" fill="#2b6fd6"/><path d="M19.4 6.2 L29 16.2 M29 6.2 L19.4 16.2" stroke="#f21c1c" stroke-width="1.5" fill="none"/></svg>
<span class="t" style="left:1340.00px;top:116.00px;font-size:12.3px;color:#1f1f1f;transform:scaleX(0.9056);-webkit-text-stroke:0.3px #1f1f1f;">Delete</span>
<svg class="b" style="left:1352.50px;top:134.05px" width="6.6" height="4.3" viewBox="-1 -1 6.6 4.3"><path d="M0 0 L2.3 2.3 L4.6 0" fill="none" stroke="#222" stroke-width="1.2" stroke-linecap="round" stroke-linejoin="round"/></svg>
<svg class="b" style="left:1382.00px;top:80.50px;" width="30" height="27" viewBox="0 0 30 27"><g transform="translate(1 4)"><rect x="1" y="1" width="25.4" height="20" fill="#fff" stroke="#2a2a2a" stroke-width="1.5"/><path d="M9.4 1 V21 M18 1 V21 M1 7.6 H26.4 M1 14.4 H26.4" stroke="#2a2a2a" stroke-width="1.4" fill="none"/><rect x="7.6" y="8" width="12.4" height="6.4" fill="#2b6fd6"/></g><path d="M7.4 1.6 H21.4 M7.4 0.2 V3 M21.4 0.2 V3" stroke="#1e6fd9" stroke-width="1.3" fill="none"/></svg>
<span class="t" style="left:1379.70px;top:115.00px;font-size:12.3px;color:#1f1f1f;transform:scaleX(0.8857);-webkit-text-stroke:0.3px #1f1f1f;">Format</span>
<svg class="b" style="left:1392.90px;top:132.25px" width="6.6" height="4.3" viewBox="-1 -1 6.6 4.3"><path d="M0 0 L2.3 2.3 L4.6 0" fill="none" stroke="#222" stroke-width="1.2" stroke-linecap="round" stroke-linejoin="round"/></svg>
<span class="t" style="left:1345.80px;top:154.00px;font-size:10.8px;color:#1f1f1f;transform:scaleX(0.8082);-webkit-text-stroke:0.3px #1f1f1f;">Cells</span>
<div class="b" style="left:1423.40px;top:79.50px;width:1.20px;height:83.10px;background:#d2d2d2;"></div>
<svg class="b" style="left:1436.00px;top:82.50px;" width="14" height="15" viewBox="0 0 14 15"><path d="M11.8 3.6 V1.4 H1.6 L7 7.4 L1.6 13.4 H11.8 V11.2" fill="none" stroke="#222" stroke-width="1.6" stroke-linejoin="miter"/></svg>
<span class="t" style="left:1454.70px;top:84.00px;font-size:12.3px;color:#1f1f1f;transform:scaleX(0.8914);-webkit-text-stroke:0.3px #1f1f1f;">AutoSum</span>
<svg class="b" style="left:1516.40px;top:87.45px" width="6.6" height="4.3" viewBox="-1 -1 6.6 4.3"><path d="M0 0 L2.3 2.3 L4.6 0" fill="none" stroke="#222" stroke-width="1.2" stroke-linecap="round" stroke-linejoin="round"/></svg>
<svg class="b" style="left:1434.50px;top:105.50px;" width="17" height="15" viewBox="0 0 17 15"><rect x="1" y="1" width="15" height="12.6" fill="#fff" stroke="#333" stroke-width="1.3"/><path d="M1 2 H16" stroke="#333" stroke-width="2"/><path d="M8.4 4.4 V10.6 M5.8 8.2 L8.4 10.8 L11 8.2" fill="none" stroke="#1e6fd9" stroke-width="1.3"/></svg>
<span class="t" style="left:1454.70px;top:108.00px;font-size:12.3px;color:#1f1f1f;transform:scaleX(0.8465);-webkit-text-stroke:0.3px #1f1f1f;">Fill</span>
<svg class="b" style="left:1471.50px;top:111.05px" width="6.6" height="4.3" viewBox="-1 -1 6.6 4.3"><path d="M0 0 L2.3 2.3 L4.6 0" fill="none" stroke="#222" stroke-width="1.2" stroke-linecap="round" stroke-linejoin="round"/></svg>
<svg class="b" style="left:1435.00px;top:129.50px;" width="16" height="16" viewBox="0 0 16 16"><path d="M9.4 1.4 L14.6 6 L7 14.4 L1.8 9.8 Z" fill="#fff" stroke="#7b3fa6" stroke-width="1.4" stroke-linejoin="round"/><path d="M4.4 7.2 L9.4 11.8 L7 14.4 L1.8 9.8 Z" fill="#9b59c2"/></svg>
<span class="t" style="left:1454.70px;top:132.00px;font-size:12.3px;color:#1f1f1f;transform:scaleX(0.8608);-webkit-text-stroke:0.3px #1f1f1f;">Clear</span>
<svg class="b" style="left:1482.70px;top:135.05px" width="6.6" height="4.3" viewBox="-1 -1 6.6 4.3"><path d="M0 0 L2.3 2.3 L4.6 0" fill="none" stroke="#222" stroke-width="1.2" stroke-linecap="round" stroke-linejoin="round"/></svg>
<svg class="b" style="left:1538.00px;top:82.00px;" width="30" height="28" viewBox="0 0 30 28"><text x="0.2" y="11.4" font-size="13.4" font-family="Liberation Sans, sans-serif" fill="#1e6fd9" stroke="#1e6fd9" stroke-width="0.4">A</text><text x="0.8" y="25" font-size="13.4" font-family="Liberation Sans, sans-serif" fill="#222" stroke="#222" stroke-width="0.4">Z</text><path d="M13 8.6 H27.2 L21.8 15 V21.4 L18.6 22.4 V15 Z" fill="#fff" stroke="#222" stroke-width="1.6" stroke-linejoin="round"/></svg>
<span class="t" style="left:1536.70px;top:115.00px;font-size:12.3px;color:#1f1f1f;transform:scaleX(0.9392);-webkit-text-stroke:0.3px #1f1f1f;">Sort &amp;</span>
<span class="t" style="left:1535.50px;top:130.00px;font-size:12.3px;color:#1f1f1f;transform:scaleX(0.8964);-webkit-text-stroke:0.3px #1f1f1f;">Filter</span>
<svg class="b" style="left:1563.60px;top:132.30px" width="6.4" height="4.2" viewBox="-1 -1 6.4 4.2"><path d="M0 0 L2.2 2.2 L4.4 0" fill="none" stroke="#222" stroke-width="1.2" stroke-linecap="round" stroke-linejoin="round"/></svg>
<svg class="b" style="left:1582.00px;top:82.00px;" width="30" height="30" viewBox="0 0 30 30"><circle cx="17.6" cy="11" r="9.4" fill="#fff" stroke="#222" stroke-width="1.6"/><path d="M10.8 17.6 L1.4 27.4" stroke="#222" stroke-width="1.8"/></svg>
<span class="t" style="left:1581.00px;top:115.00px;font-size:12.3px;color:#1f1f1f;transform:scaleX(0.9002);-webkit-text-stroke:0.3px #1f1f1f;">Find &amp;</span>
<span class="t" style="left:1576.70px;top:130.00px;font-size:12.3px;color:#1f1f1f;transform:scaleX(0.8805);-webkit-text-stroke:0.3px #1f1f1f;">Select</span>
<svg class="b" style="left:1610.00px;top:132.30px" width="6.4" height="4.2" viewBox="-1 -1 6.4 4.2"><path d="M0 0 L2.2 2.2 L4.4 0" fill="none" stroke="#222" stroke-width="1.2" stroke-linecap="round" stroke-linejoin="round"/></svg>
<span class="t" style="left:1510.00px;top:154.00px;font-size:10.8px;color:#1f1f1f;transform:scaleX(0.8964);-webkit-text-stroke:0.3px #1f1f1f;">Editing</span>
<div class="b" style="left:1626.10px;top:79.50px;width:1.20px;height:83.10px;background:#d2d2d2;"></div>
<svg class="b" style="left:1642.00px;top:82.00px;" width="28" height="28" viewBox="0 0 28 28"><rect x="1" y="1" width="26" height="26" rx="1.5" fill="#fde9e4" stroke="#d4381c" stroke-width="1.5"/><g fill="#fff" stroke="#d4381c" stroke-width="1.3"><rect x="4.4" y="4.4" width="8" height="8"/><rect x="15.6" y="4.4" width="8" height="8"/><rect x="4.4" y="15.6" width="8" height="8"/><rect x="15.6" y="15.6" width="8" height="8"/></g></svg>
<span class="t" style="left:1636.70px;top:115.00px;font-size:12.3px;color:#1f1f1f;transform:scaleX(0.9327);-webkit-text-stroke:0.3px #1f1f1f;">Add-ins</span>
<span class="t" style="left:1638.00px;top:154.00px;font-size:10.8px;color:#1f1f1f;transform:scaleX(0.9066);-webkit-text-stroke:0.3px #1f1f1f;">Add-ins</span>
<div class="b" style="left:1684.40px;top:79.50px;width:1.20px;height:83.10px;background:#d2d2d2;"></div>
<svg class="b" style="left:1698.00px;top:82.00px;" width="30" height="28" viewBox="0 0 30 28"><defs><clipPath id="cpc"><path d="M8 1.4 H19 C21.4 1.4 22.6 2.8 23.2 4.8 L24.6 9.4 H26.8 C28.8 9.4 29.6 11.2 29 13.2 L26.2 22 C25.4 24.6 23.8 26.6 21.2 26.6 H11 C8.6 26.6 7.4 25.2 6.8 23.2 L5.4 18.6 H3.2 C1.2 18.6 0.4 16.8 1 14.8 L3.8 6 C4.6 3.4 5.6 1.4 8 1.4 Z"/></clipPath></defs><g clip-path="url(#cpc)"><rect x="0" y="0" width="30" height="28" fill="#2a6fe0"/><rect x="0" y="0" width="30" height="7.4" fill="#2f7fe8"/><rect x="0" y="7.4" width="14" height="6" fill="#2c6a3a"/><rect x="0" y="13.4" width="14" height="3.4" fill="#c9a21c"/><rect x="0" y="16.8" width="14" height="3" fill="#f08a1e"/><path d="M4 19.6 H16 L30 16 V28 H4 Z" fill="#e8321c"/><path d="M16 19.6 L17.6 13 H30 V19.6 Z" fill="#ef4a1e"/><path d="M17.4 7 H30 V14.6 H16 Z" fill="#8a3acb"/><path d="M19 7 L20.4 1 H30 V7 Z" fill="#4a58e0"/><path d="M13.6 8 H18 L15.8 19.6 H11.4 Z" fill="#fff"/></g></svg>
<span class="t" style="left:1695.00px;top:116.00px;font-size:12.3px;color:#1f1f1f;transform:scaleX(0.9611);-webkit-text-stroke:0.3px #1f1f1f;">Copilot</span>
<svg class="b" style="left:1709.30px;top:134.05px" width="6.6" height="4.3" viewBox="-1 -1 6.6 4.3"><path d="M0 0 L2.3 2.3 L4.6 0" fill="none" stroke="#222" stroke-width="1.2" stroke-linecap="round" stroke-linejoin="round"/></svg>
<div class="b" style="left:1740.20px;top:79.50px;width:1.20px;height:83.10px;background:#d2d2d2;"></div>
<svg class="b" style="left:1768.50px;top:83.00px;" width="26" height="29" viewBox="0 0 26 29"><path d="M2 1.4 H12.4 L18 7 V18 M9 21.6 H4 C2.6 21.6 2 21 2 19.6 V3.4 C2 2 2.6 1.4 4 1.4" fill="#fff" stroke="#1e5fe0" stroke-width="1.4" stroke-linejoin="round"/><path d="M5.4 15.4 C8 13.6 9.8 9.6 9.4 6.8 C9 5.6 8 6 8.2 7.4 C8.6 10.4 11.4 13.6 14.4 13.6 C15.6 13.2 15 12.2 13.6 12.4 C10.8 12.6 7.2 13.8 5.4 15.4 Z" fill="none" stroke="#1e5fe0" stroke-width="1"/><g fill="none" stroke="#1e5fe0" stroke-width="1.6" stroke-linecap="round"><path d="M14.6 19.4 L17.4 16.6 C19.2 14.8 22 17.6 20.2 19.4 L18.6 21"/><path d="M20.4 22 L17.6 24.8 C15.8 26.6 13 23.8 14.8 22 L16.4 20.4" transform="translate(-3.2 1.6)"/></g></svg>
<span class="t" style="left:1762.00px;top:115.00px;font-size:12.3px;color:#1f1f1f;transform:scaleX(0.8668);-webkit-text-stroke:0.3px #1f1f1f;">Create</span>
<span class="t" style="left:1764.00px;top:130.00px;font-size:12.3px;color:#1f1f1f;transform:scaleX(0.8205);-webkit-text-stroke:0.3px #1f1f1f;">a PDF</span>
<span class="t" style="left:1744.00px;top:154.00px;font-size:10.8px;color:#1f1f1f;transform:scaleX(0.9456);-webkit-text-stroke:0.3px #1f1f1f;">Adobe Acrobat</span>
<div class="b" style="left:1813.90px;top:79.50px;width:1.20px;height:83.10px;background:#d2d2d2;"></div>
<svg class="b" style="left:1826.50px;top:85.50px;" width="31" height="21" viewBox="0 0 31 21"><path d="M3.6 1.4 L20 0.6 L21.4 15 L5 16.4 Z" fill="#6fa8e8"/><path d="M10 3.4 L29.4 3 L26.6 15.6 L8 16.6 Z" fill="#4a90e0"/><path d="M0.8 6.6 L17 5.6 L20 17.6 L3.8 19 Z" fill="#1f55b8"/><path d="M12 10 C12 6.6 18.4 6.6 18.4 10 C18.4 12 17 12.6 16.8 14.6 H13.6 C13.4 12.6 12 12 12 10 Z" fill="#ffe14a" stroke="#8a6a00" stroke-width="0.6"/><rect x="13.4" y="14.8" width="3.6" height="3.6" rx="1" fill="#222"/></svg>
<span class="t" style="left:1826.60px;top:115.00px;font-size:12.3px;color:#1f1f1f;transform:scaleX(0.8691);-webkit-text-stroke:0.3px #1f1f1f;">Solver</span>
<span class="t" style="left:1827.50px;top:154.00px;font-size:10.8px;color:#1f1f1f;transform:scaleX(0.8853);-webkit-text-stroke:0.3px #1f1f1f;">Solver</span>
<div class="b" style="left:1867.90px;top:79.50px;width:1.20px;height:83.10px;background:#d2d2d2;"></div>
<svg class="b" style="left:1893.50px;top:152.35px" width="11" height="6.5" viewBox="-1 -1 11 6.5"><path d="M0 0 L4.5 4.5 L9 0" fill="none" stroke="#222" stroke-width="1.4" stroke-linecap="round" stroke-linejoin="round"/></svg>
<div class="b" style="left:0.00px;top:985.00px;width:1920.00px;height:30.00px;background:#dbdbdb;"></div>
<div class="b" style="left:271.60px;top:984.60px;width:132.00px;height:5.40px;background:#fff;"></div>
<div class="b" style="left:262.00px;top:985.00px;width:9.70px;height:10.00px;background:#dbdbdb;border-top-right-radius:4px;"></div>
<div class="b" style="left:403.50px;top:985.00px;width:9.50px;height:10.00px;background:#dbdbdb;border-top-left-radius:4px;"></div>
<svg class="b" style="left:21.00px;top:993.00px;" width="12" height="13" viewBox="0 0 12 13"><path d="M8 1.6 L3 6.5 L8 11.4" fill="none" stroke="#757575" stroke-width="1.5"/></svg>
<svg class="b" style="left:51.00px;top:993.00px;" width="12" height="13" viewBox="0 0 12 13"><path d="M4 1.6 L9 6.5 L4 11.4" fill="none" stroke="#222" stroke-width="1.6"/></svg>
<div class="b" style="left:105.80px;top:988.30px;width:48.00px;height:22.60px;background:#fff;border-radius:4.5px;"></div>
<span class="t" style="left:114.30px;top:993.00px;font-size:14.2px;color:#111;transform:scaleX(0.9097);-webkit-text-stroke:0.3px #111;">Index</span>
<div class="b" style="left:162.00px;top:988.30px;width:102.20px;height:22.60px;background:#ffff99;border-radius:4.5px;"></div>
<span class="t" style="left:171.20px;top:993.00px;font-size:14.2px;color:#111;transform:scaleX(0.9232);-webkit-text-stroke:0.3px #111;">Global Control</span>
<div class="b" style="left:411.70px;top:988.30px;width:118.70px;height:22.60px;background:#30084f;border-radius:4.5px;"></div>
<span class="t" style="left:420.80px;top:993.00px;font-size:14.2px;color:#efe6fa;transform:scaleX(0.8722);">Sources and Uses</span>
<div class="b" style="left:538.00px;top:988.30px;width:75.90px;height:22.60px;background:#ffff99;border-radius:4.5px;"></div>
<span class="t" style="left:547.00px;top:993.00px;font-size:14.2px;color:#111;transform:scaleX(0.8930);-webkit-text-stroke:0.3px #111;">Feedstock</span>
<div class="b" style="left:621.70px;top:988.30px;width:102.50px;height:22.60px;background:#ffff99;border-radius:4.5px;"></div>
<span class="t" style="left:631.20px;top:993.00px;font-size:14.2px;color:#111;transform:scaleX(0.8777);-webkit-text-stroke:0.3px #111;">Forward Prices</span>
<div class="b" style="left:731.70px;top:988.30px;width:113.30px;height:22.60px;background:#ffff99;border-radius:4.5px;"></div>
<span class="t" style="left:741.30px;top:993.00px;font-size:14.2px;color:#111;transform:scaleX(0.8973);-webkit-text-stroke:0.3px #111;">Feedstock Detail</span>
<div class="b" style="left:853.30px;top:988.30px;width:52.90px;height:22.60px;background:#ffff99;border-radius:4.5px;"></div>
<span class="t" style="left:860.50px;top:993.00px;font-size:14.2px;color:#111;transform:scaleX(0.7919);-webkit-text-stroke:0.3px #111;">OPEX1</span>
<div class="b" style="left:914.20px;top:988.30px;width:54.60px;height:22.60px;background:#ffff99;border-radius:4.5px;"></div>
<span class="t" style="left:921.70px;top:993.00px;font-size:14.2px;color:#111;transform:scaleX(0.8088);-webkit-text-stroke:0.3px #111;">OPEX2</span>
<div class="b" style="left:977.20px;top:988.30px;width:54.80px;height:22.60px;background:#ffff99;border-radius:4.5px;"></div>
<span class="t" style="left:985.50px;top:993.00px;font-size:14.2px;color:#111;transform:scaleX(0.7956);-webkit-text-stroke:0.3px #111;">CAPEX</span>
<div class="b" style="left:1040.00px;top:988.30px;width:124.20px;height:22.60px;background:#ffff99;border-radius:4.5px;"></div>
<span class="t" style="left:1049.70px;top:993.00px;font-size:14.2px;color:#111;transform:scaleX(0.9111);-webkit-text-stroke:0.3px #111;">Construction Loan</span>
<div class="b" style="left:1172.00px;top:988.30px;width:49.20px;height:22.60px;background:#ffff99;border-radius:4.5px;"></div>
<span class="t" style="left:1179.50px;top:993.00px;font-size:14.2px;color:#111;transform:scaleX(0.8560);-webkit-text-stroke:0.3px #111;">Loan1</span>
<div class="b" style="left:1229.20px;top:988.30px;width:51.10px;height:22.60px;background:#ffff99;border-radius:4.5px;"></div>
<span class="t" style="left:1238.00px;top:993.00px;font-size:14.2px;color:#111;transform:scaleX(0.8737);-webkit-text-stroke:0.3px #111;">Loan2</span>
<div class="b" style="left:1288.00px;top:988.30px;width:75.00px;height:22.60px;background:#ffff99;border-radius:4.5px;"></div>
<span class="t" style="left:1296.70px;top:993.00px;font-size:14.2px;color:#111;transform:scaleX(0.9029);-webkit-text-stroke:0.3px #111;">Cap Table</span>
<div class="b" style="left:1370.80px;top:988.30px;width:95.00px;height:22.60px;background:#ffff99;border-radius:4.5px;"></div>
<span class="t" style="left:1380.00px;top:993.00px;font-size:14.2px;color:#111;transform:scaleX(0.8974);-webkit-text-stroke:0.3px #111;">Startup Costs</span>
<div class="b" style="left:1473.80px;top:988.30px;width:104.50px;height:22.60px;background:#ffff99;border-radius:4.5px;"></div>
<span class="t" style="left:1483.00px;top:993.00px;font-size:14.2px;color:#111;transform:scaleX(0.9239);-webkit-text-stroke:0.3px #111;">Terminal Value</span>
<div class="b" style="left:157.00px;top:991.50px;width:1.00px;height:17.00px;background:#c4c4c4;"></div>
<div class="b" style="left:267.80px;top:991.50px;width:1.00px;height:17.00px;background:#c4c4c4;"></div>
<div class="b" style="left:407.00px;top:991.50px;width:1.00px;height:17.00px;background:#c4c4c4;"></div>
<div class="b" style="left:534.10px;top:991.50px;width:1.00px;height:17.00px;background:#c4c4c4;"></div>
<div class="b" style="left:617.00px;top:991.50px;width:1.00px;height:17.00px;background:#c4c4c4;"></div>
<div class="b" style="left:727.00px;top:991.50px;width:1.00px;height:17.00px;background:#c4c4c4;"></div>
<div class="b" style="left:849.20px;top:991.50px;width:1.00px;height:17.00px;background:#c4c4c4;"></div>
<div class="b" style="left:910.00px;top:991.50px;width:1.00px;height:17.00px;background:#c4c4c4;"></div>
<div class="b" style="left:972.80px;top:991.50px;width:1.00px;height:17.00px;background:#c4c4c4;"></div>
<div class="b" style="left:1035.80px;top:991.50px;width:1.00px;height:17.00px;background:#c4c4c4;"></div>
<div class="b" style="left:1167.80px;top:991.50px;width:1.00px;height:17.00px;background:#c4c4c4;"></div>
<div class="b" style="left:1225.00px;top:991.50px;width:1.00px;height:17.00px;background:#c4c4c4;"></div>
<div class="b" style="left:1284.00px;top:991.50px;width:1.00px;height:17.00px;background:#c4c4c4;"></div>
<div class="b" style="left:1366.00px;top:991.50px;width:1.00px;height:17.00px;background:#c4c4c4;"></div>
<div class="b" style="left:1469.00px;top:991.50px;width:1.00px;height:17.00px;background:#c4c4c4;"></div>
<div class="b" style="left:1582.00px;top:991.50px;width:1.00px;height:17.00px;background:#c4c4c4;"></div>
<div class="b" style="left:275.50px;top:1010.60px;width:125.50px;height:1.00px;background:#c2c2c2;"></div>
<div class="b" style="left:273.10px;top:988.30px;width:129.30px;height:21.60px;border-radius:3.5px;background:linear-gradient(180deg,#fde8e0 0%,#fde8e0 3%,#d6d2f8 5%,#d6d2f8 14%,#d8d2dc 16%,#d8d2dc 21%,#dcb6d8 23%,#dcb6d8 30%,#ccb6e0 32%,#ccb6e0 37%,#b8a2e0 40%,#b8a2e0 54%,#c4a8cc 56%,#c4a8cc 63%,#a284ba 66%,#a284ba 85%,#a86cc8 88%,#a86cc8 96%,#6a86c4 98%,#6a86c4 100%);"></div>
<span class="t" style="left:280.00px;top:990.00px;font-size:14.2px;color:#111;font-weight:700;transform:scaleX(0.8587);">Executive Summary</span>
<div class="b" style="left:280.00px;top:1007.10px;width:116.00px;height:2.00px;background:#062e12;"></div>
<div class="b" style="left:1585.8px;top:988.3px;width:80.2px;height:22.6px;background:#30084f;border-radius:4.5px 0 0 4.5px;overflow:hidden;"><span class="t" style="left:9.50px;top:5.00px;font-size:14.2px;color:#e4d4f6;transform:scaleX(0.9600);">Monthly Detail</span></div>
<div class="b" style="left:1675.20px;top:997.80px;width:2.90px;height:2.90px;background:#1c1c1c;border-radius:1.4px;"></div>
<div class="b" style="left:1679.10px;top:997.80px;width:2.90px;height:2.90px;background:#1c1c1c;border-radius:1.4px;"></div>
<div class="b" style="left:1683.00px;top:997.80px;width:2.90px;height:2.90px;background:#1c1c1c;border-radius:1.4px;"></div>
<svg class="b" style="left:1704.50px;top:993.50px;" width="12" height="12" viewBox="0 0 12 12"><path d="M6 0.6 V11.4 M0.6 6 H11.4" stroke="#222" stroke-width="1.4" fill="none"/></svg>
<div class="b" style="left:1740.00px;top:994.60px;width:2.00px;height:2.00px;background:#222;"></div>
<div class="b" style="left:1740.00px;top:998.90px;width:2.00px;height:2.00px;background:#222;"></div>
<div class="b" style="left:1740.00px;top:1003.20px;width:2.00px;height:2.00px;background:#222;"></div>
<svg class="b" style="left:1759.50px;top:994.50px;" width="8" height="10" viewBox="0 0 8 10"><path d="M7.4 0.8 V9.2 L0.8 5 Z" fill="#2b2b2b"/></svg>
<div class="b" style="left:1771.30px;top:994.90px;width:106.90px;height:9.00px;background:#2b2b2b;border-radius:4.5px;"></div>
<svg class="b" style="left:1891.00px;top:994.50px;" width="8" height="10" viewBox="0 0 8 10"><path d="M0.6 0.8 V9.2 L7.2 5 Z" fill="#2b2b2b"/></svg>
<div class="b" style="left:0.00px;top:1014.60px;width:1920.00px;height:1.10px;background:#f4f4f4;"></div>
<div class="b" style="left:0.00px;top:1015.70px;width:1920.00px;height:19.70px;background:#dbdbdb;"></div>
<span class="t" style="left:10.80px;top:1020.00px;font-size:10.8px;color:#222;transform:scaleX(0.8585);-webkit-text-stroke:0.3px #222;">Ready</span>
<svg class="b" style="left:56.00px;top:1018.50px;" width="16" height="14" viewBox="0 0 16 14"><rect x="1" y="1" width="13" height="11.4" fill="none" stroke="#333" stroke-width="1.2"/><path d="M1 3.2 H14" stroke="#333" stroke-width="1.6"/><path d="M3 6 H7 M3 8.2 H6 M3 10.4 H6" stroke="#333" stroke-width="1"/><circle cx="10.4" cy="9.6" r="3.4" fill="#dbdbdb" stroke="#222" stroke-width="1.1"/><circle cx="10.4" cy="9.6" r="1.4" fill="#222"/></svg>
<svg class="b" style="left:86.50px;top:1017.50px;" width="15" height="15" viewBox="0 0 15 15"><g fill="none" stroke="#222" stroke-width="1.1" stroke-linecap="round"><circle cx="6.6" cy="2.4" r="1.6"/><path d="M1.2 5.4 C4 6.6 9 6.6 12 5.4 M6.6 6.4 V9.4 M6.6 9.4 L4 13.6 M6.6 9.4 L8 11.4"/><path d="M9.4 10 L13.6 14 M13.6 10 L9.4 14"/></g></svg>
<span class="t" style="left:103.70px;top:1020.00px;font-size:10.8px;color:#1a1a1a;font-weight:700;transform:scaleX(0.8826);">Accessibility: Investigate</span>
<div class="b" style="left:1640.00px;top:1015.70px;width:38.00px;height:19.70px;background:#bdbdbd;"></div>
<svg class="b" style="left:1651.80px;top:1018.50px;" width="14" height="13" viewBox="0 0 14 13"><rect x="0.8" y="0.8" width="12" height="11" fill="#fff" stroke="#222" stroke-width="1.5"/><path d="M4.8 0.8 V11.8 M8.8 0.8 V11.8 M0.8 4.4 H12.8 M0.8 8 H12.8" stroke="#222" stroke-width="1.5" fill="none"/></svg>
<svg class="b" style="left:1689.50px;top:1018.20px;" width="14" height="13" viewBox="0 0 14 13"><rect x="0.8" y="0.8" width="12.2" height="11.2" rx="1" fill="none" stroke="#222" stroke-width="1.3"/><rect x="3.4" y="2.8" width="7" height="7.4" fill="none" stroke="#222" stroke-width="1"/><path d="M4 5 H10 M4 6.8 H10 M4 8.6 H10" stroke="#222" stroke-width="0.8"/></svg>
<svg class="b" style="left:1726.80px;top:1018.20px;" width="14" height="13" viewBox="0 0 14 13"><rect x="0.8" y="0.8" width="12.2" height="11.2" fill="none" stroke="#222" stroke-width="1.4"/><path d="M0.8 6.6 H8 V0.8 M4.4 0.8 V4" stroke="#222" stroke-width="1.3" fill="none"/></svg>
<div class="b" style="left:1758.20px;top:1024.70px;width:6.80px;height:1.10px;background:#333;"></div>
<div class="b" style="left:1770.00px;top:1024.80px;width:94.00px;height:1.00px;background:#555;"></div>
<div class="b" style="left:1816.00px;top:1022.40px;width:1.00px;height:5.80px;background:#555;"></div>
<div class="b" style="left:1810.00px;top:1020.20px;width:3.90px;height:10.00px;background:#2b2b2b;border-radius:0.8px;"></div>
<svg class="b" style="left:1868.00px;top:1021.50px;" width="8" height="8" viewBox="0 0 8 8"><path d="M4 0.6 V7.4 M0.6 4 H7.4" stroke="#333" stroke-width="1.1" fill="none"/></svg>
<span class="t" style="left:1888.00px;top:1021.00px;font-size:10.4px;color:#222;transform:scaleX(0.8551);-webkit-text-stroke:0.3px #222;">90%</span>
<svg class="b" style="left:0;top:1035.4px" width="1920" height="44.6" viewBox="0 0 1920 44.6" shape-rendering="crispEdges"><defs><pattern id="dz" width="192" height="45" patternUnits="userSpaceOnUse"><rect width="192" height="45" fill="#99dcd9"/><path d="M2 0.5h2M8 0.5h3M12 0.5h2M20 0.5h2M26 0.5h2M31 0.5h2M35 0.5h2M39 0.5h1M46 0.5h3M54 0.5h1M57 0.5h5M64 0.5h2M67 0.5h3M71 0.5h2M74 0.5h1M79 0.5h4M86 0.5h6M93 0.5h1M95 0.5h1M97 0.5h3M102 0.5h1M109 0.5h3M113 0.5h5M121 0.5h2M124 0.5h7M132 0.5h5M139 0.5h3M144 0.5h3M149 0.5h3M154 0.5h3M159 0.5h1M161 0.5h2M165 0.5h2M169 0.5h1M172 0.5h1M174 0.5h2M179 0.5h1M181 0.5h1M183 0.5h2M187 0.5h1M189 0.5h1M0 1.5h1M2 1.5h2M9 1.5h6M16 1.5h1M20 1.5h1M22 1.5h3M28 1.5h1M31 1.5h1M35 1.5h1M43 1.5h4M48 1.5h1M58 1.5h1M60 1.5h1M63 1.5h1M65 1.5h1M68 1.5h1M72 1.5h1M76 1.5h1M78 1.5h3M83 1.5h2M88 1.5h2M94 1.5h2M98 1.5h2M103 1.5h1M106 1.5h1M111 1.5h5M118 1.5h2M122 1.5h1M124 1.5h4M131 1.5h5M138 1.5h2M145 1.5h2M148 1.5h1M150 1.5h3M154 1.5h3M159 1.5h2M163 1.5h1M165 1.5h1M168 1.5h4M173 1.5h2M176 1.5h1M178 1.5h1M188 1.5h1M191 1.5h1M1 2.5h1M3 2.5h2M7 2.5h2M10 2.5h5M17 2.5h1M19 2.5h1M22 2.5h1M24 2.5h1M26 2.5h1M28 2.5h1M30 2.5h2M33 2.5h1M36 2.5h1M40 2.5h1M45 2.5h1M47 2.5h1M53 2.5h2M56 2.5h5M69 2.5h2M72 2.5h1M74 2.5h1M77 2.5h7M90 2.5h1M93 2.5h1M96 2.5h3M100 2.5h2M105 2.5h1M108 2.5h2M112 2.5h2M115 2.5h1M117 2.5h1M121 2.5h1M125 2.5h1M129 2.5h1M131 2.5h5M139 2.5h1M141 2.5h1M144 2.5h1M147 2.5h1M155 2.5h1M161 2.5h2M169 2.5h1M172 2.5h2M175 2.5h2M178 2.5h1M181 2.5h2M184 2.5h1M187 2.5h1M0 3.5h2M4 3.5h3M8 3.5h1M10 3.5h2M14 3.5h1M17 3.5h2M21 3.5h1M23 3.5h1M26 3.5h1M28 3.5h4M35 3.5h1M37 3.5h5M43 3.5h2M47 3.5h1M51 3.5h1M55 3.5h2M58 3.5h3M63 3.5h1M69 3.5h3M77 3.5h4M85 3.5h1M88 3.5h1M91 3.5h1M93 3.5h1M98 3.5h1M101 3.5h1M104 3.5h1M106 3.5h1M110 3.5h1M114 3.5h7M123 3.5h1M125 3.5h1M127 3.5h2M130 3.5h1M133 3.5h3M139 3.5h2M146 3.5h1M148 3.5h3M154 3.5h2M158 3.5h4M163 3.5h8M173 3.5h1M180 3.5h5M186 3.5h1M188 3.5h1M191 3.5h1M0 4.5h1M3 4.5h1M5 4.5h1M7 4.5h1M11 4.5h1M14 4.5h3M18 4.5h2M21 4.5h1M25 4.5h5M31 4.5h2M37 4.5h1M39 4.5h3M46 4.5h1M48 4.5h1M52 4.5h1M54 4.5h1M56 4.5h1M59 4.5h1M61 4.5h1M64 4.5h1M66 4.5h1M72 4.5h1M75 4.5h5M82 4.5h1M85 4.5h1M87 4.5h1M89 4.5h7M97 4.5h1M99 4.5h1M102 4.5h1M104 4.5h1M108 4.5h1M110 4.5h1M115 4.5h6M122 4.5h2M130 4.5h3M136 4.5h1M139 4.5h2M144 4.5h1M151 4.5h2M156 4.5h3M161 4.5h3M165 4.5h1M167 4.5h1M169 4.5h1M171 4.5h1M173 4.5h2M177 4.5h4M183 4.5h1M185 4.5h4M191 4.5h1M6 5.5h1M10 5.5h2M14 5.5h2M20 5.5h1M22 5.5h2M26 5.5h1M28 5.5h3M33 5.5h1M39 5.5h1M45 5.5h4M51 5.5h7M59 5.5h1M71 5.5h3M78 5.5h3M82 5.5h4M88 5.5h5M94 5.5h2M98 5.5h2M102 5.5h2M107 5.5h1M113 5.5h2M116 5.5h1M119 5.5h1M122 5.5h1M124 5.5h1M128 5.5h1M130 5.5h3M139 5.5h2M145 5.5h1M147 5.5h1M149 5.5h1M152 5.5h5M160 5.5h1M167 5.5h1M169 5.5h3M181 5.5h1M184 5.5h1M189 5.5h1M1 6.5h1M3 6.5h1M6 6.5h3M11 6.5h1M13 6.5h1M15 6.5h1M19 6.5h1M21 6.5h2M26 6.5h7M36 6.5h7M44 6.5h1M46 6.5h1M50 6.5h2M53 6.5h1M55 6.5h1M57 6.5h4M62 6.5h1M64 6.5h3M68 6.5h3M72 6.5h2M75 6.5h1M78 6.5h1M80 6.5h1M82 6.5h1M87 6.5h1M90 6.5h2M95 6.5h1M99 6.5h2M102 6.5h2M107 6.5h1M109 6.5h1M113 6.5h4M119 6.5h8M128 6.5h1M132 6.5h1M135 6.5h1M139 6.5h2M143 6.5h1M149 6.5h2M155 6.5h1M157 6.5h1M159 6.5h3M165 6.5h3M169 6.5h1M174 6.5h1M177 6.5h2M180 6.5h4M185 6.5h1M189 6.5h1M0 7.5h2M3 7.5h2M6 7.5h1M8 7.5h1M10 7.5h1M21 7.5h1M23 7.5h2M29 7.5h3M33 7.5h5M41 7.5h2M44 7.5h1M51 7.5h3M55 7.5h7M66 7.5h5M73 7.5h4M78 7.5h1M81 7.5h1M90 7.5h1M94 7.5h2M98 7.5h1M100 7.5h1M102 7.5h1M104 7.5h4M112 7.5h1M114 7.5h3M122 7.5h3M127 7.5h1M133 7.5h2M138 7.5h1M140 7.5h1M143 7.5h2M147 7.5h3M152 7.5h1M155 7.5h2M160 7.5h1M165 7.5h1M172 7.5h3M179 7.5h1M181 7.5h2M186 7.5h1M188 7.5h1M191 7.5h1M0 8.5h2M3 8.5h2M6 8.5h1M8 8.5h1M10 8.5h1M12 8.5h2M20 8.5h1M22 8.5h1M24 8.5h1M26 8.5h1M28 8.5h2M32 8.5h1M35 8.5h5M41 8.5h1M48 8.5h1M54 8.5h1M57 8.5h4M65 8.5h1M67 8.5h5M73 8.5h1M75 8.5h1M81 8.5h2M91 8.5h3M97 8.5h3M102 8.5h4M107 8.5h1M110 8.5h6M117 8.5h1M120 8.5h1M122 8.5h3M127 8.5h3M135 8.5h1M143 8.5h3M147 8.5h1M150 8.5h1M154 8.5h2M158 8.5h1M160 8.5h1M165 8.5h2M168 8.5h4M173 8.5h5M180 8.5h3M184 8.5h1M190 8.5h2M0 9.5h2M4 9.5h1M8 9.5h1M11 9.5h1M13 9.5h1M18 9.5h2M21 9.5h1M25 9.5h2M28 9.5h1M31 9.5h1M35 9.5h5M42 9.5h1M44 9.5h1M47 9.5h1M50 9.5h3M55 9.5h1M57 9.5h3M62 9.5h1M64 9.5h3M69 9.5h2M74 9.5h1M76 9.5h9M86 9.5h2M92 9.5h1M95 9.5h3M100 9.5h1M102 9.5h4M108 9.5h5M116 9.5h4M121 9.5h1M127 9.5h2M134 9.5h1M136 9.5h1M139 9.5h1M141 9.5h5M147 9.5h2M152 9.5h1M159 9.5h1M164 9.5h1M170 9.5h1M176 9.5h1M178 9.5h2M181 9.5h1M183 9.5h2M187 9.5h5M0 10.5h1M2 10.5h1M8 10.5h1M10 10.5h2M13 10.5h3M17 10.5h6M26 10.5h1M28 10.5h1M30 10.5h1M34 10.5h3M38 10.5h1M40 10.5h1M42 10.5h1M44 10.5h1M46 10.5h1M53 10.5h2M56 10.5h1M59 10.5h1M62 10.5h2M65 10.5h2M68 10.5h2M73 10.5h1M77 10.5h2M80 10.5h1M82 10.5h2M86 10.5h3M90 10.5h3M94 10.5h1M97 10.5h3M102 10.5h1M109 10.5h1M112 10.5h4M117 10.5h3M122 10.5h1M125 10.5h2M128 10.5h2M132 10.5h2M135 10.5h3M141 10.5h2M144 10.5h1M146 10.5h3M150 10.5h1M156 10.5h2M159 10.5h2M162 10.5h1M167 10.5h2M172 10.5h1M175 10.5h1M180 10.5h3M184 10.5h1M187 10.5h3M191 10.5h1M1 11.5h3M10 11.5h2M15 11.5h4M20 11.5h1M24 11.5h1M29 11.5h4M36 11.5h3M41 11.5h1M43 11.5h10M59 11.5h3M63 11.5h1M65 11.5h1M67 11.5h10M78 11.5h2M82 11.5h1M85 11.5h3M89 11.5h1M96 11.5h1M105 11.5h1M109 11.5h1M113 11.5h1M115 11.5h4M122 11.5h1M124 11.5h1M126 11.5h2M129 11.5h6M136 11.5h1M138 11.5h3M142 11.5h2M145 11.5h1M149 11.5h5M155 11.5h2M158 11.5h2M161 11.5h2M166 11.5h2M169 11.5h1M173 11.5h4M180 11.5h3M187 11.5h2M2 12.5h1M7 12.5h1M9 12.5h2M14 12.5h1M16 12.5h2M19 12.5h1M21 12.5h1M23 12.5h1M27 12.5h1M30 12.5h4M36 12.5h1M40 12.5h2M44 12.5h3M48 12.5h2M53 12.5h4M58 12.5h1M61 12.5h3M68 12.5h3M73 12.5h1M75 12.5h3M79 12.5h1M85 12.5h1M88 12.5h6M96 12.5h6M103 12.5h1M105 12.5h1M108 12.5h1M110 12.5h2M119 12.5h1M124 12.5h1M131 12.5h1M133 12.5h4M138 12.5h1M142 12.5h2M147 12.5h3M157 12.5h1M159 12.5h4M164 12.5h5M171 12.5h2M177 12.5h1M180 12.5h2M185 12.5h3M189 12.5h1M191 12.5h1M1 13.5h3M5 13.5h1M7 13.5h1M13 13.5h1M19 13.5h3M23 13.5h1M28 13.5h2M31 13.5h1M43 13.5h2M47 13.5h1M49 13.5h1M52 13.5h4M59 13.5h3M63 13.5h1M69 13.5h2M73 13.5h1M75 13.5h1M77 13.5h1M81 13.5h3M86 13.5h1M93 13.5h1M97 13.5h1M99 13.5h1M101 13.5h5M107 13.5h1M109 13.5h1M111 13.5h1M115 13.5h2M124 13.5h2M127 13.5h1M132 13.5h1M138 13.5h4M143 13.5h4M148 13.5h6M158 13.5h1M160 13.5h6M167 13.5h1M171 13.5h1M173 13.5h2M177 13.5h2M184 13.5h1M186 13.5h1M189 13.5h1M5 14.5h1M7 14.5h3M11 14.5h4M17 14.5h2M22 14.5h3M28 14.5h3M32 14.5h1M35 14.5h1M38 14.5h1M42 14.5h1M46 14.5h2M53 14.5h3M60 14.5h2M68 14.5h2M72 14.5h5M78 14.5h2M81 14.5h5M92 14.5h1M95 14.5h1M97 14.5h1M99 14.5h1M101 14.5h3M105 14.5h1M107 14.5h1M111 14.5h3M115 14.5h2M124 14.5h4M130 14.5h6M138 14.5h2M141 14.5h2M145 14.5h3M149 14.5h1M151 14.5h3M155 14.5h2M164 14.5h2M167 14.5h3M172 14.5h3M177 14.5h2M184 14.5h1M189 14.5h1M0 15.5h1M3 15.5h2M11 15.5h3M15 15.5h2M20 15.5h1M23 15.5h1M27 15.5h1M29 15.5h4M35 15.5h1M37 15.5h1M39 15.5h2M42 15.5h1M47 15.5h1M49 15.5h2M52 15.5h3M56 15.5h2M59 15.5h2M67 15.5h1M70 15.5h4M75 15.5h4M80 15.5h2M91 15.5h1M93 15.5h2M98 15.5h2M102 15.5h1M104 15.5h1M106 15.5h2M109 15.5h2M112 15.5h2M116 15.5h4M122 15.5h2M126 15.5h2M130 15.5h4M137 15.5h2M140 15.5h2M143 15.5h1M145 15.5h1M149 15.5h2M152 15.5h2M156 15.5h2M160 15.5h3M165 15.5h1M169 15.5h1M172 15.5h2M175 15.5h2M191 15.5h1M1 16.5h2M5 16.5h2M8 16.5h1M14 16.5h2M18 16.5h1M21 16.5h1M29 16.5h1M36 16.5h1M39 16.5h4M50 16.5h1M54 16.5h1M56 16.5h1M58 16.5h2M61 16.5h1M64 16.5h1M66 16.5h1M69 16.5h1M74 16.5h1M76 16.5h1M78 16.5h2M82 16.5h1M86 16.5h3M91 16.5h1M93 16.5h3M97 16.5h2M101 16.5h2M104 16.5h1M106 16.5h1M111 16.5h3M116 16.5h1M125 16.5h3M131 16.5h3M136 16.5h1M141 16.5h1M145 16.5h1M150 16.5h1M155 16.5h6M165 16.5h2M168 16.5h1M170 16.5h3M177 16.5h3M182 16.5h1M185 16.5h3M191 16.5h1M3 17.5h2M7 17.5h2M10 17.5h1M12 17.5h2M16 17.5h1M21 17.5h2M28 17.5h3M33 17.5h1M35 17.5h1M37 17.5h1M39 17.5h1M42 17.5h3M48 17.5h1M51 17.5h2M60 17.5h1M69 17.5h1M76 17.5h1M83 17.5h1M85 17.5h1M88 17.5h2M91 17.5h1M96 17.5h1M99 17.5h3M104 17.5h1M107 17.5h2M110 17.5h1M112 17.5h1M115 17.5h4M121 17.5h3M128 17.5h2M132 17.5h2M136 17.5h1M140 17.5h1M143 17.5h1M149 17.5h1M152 17.5h1M154 17.5h6M161 17.5h2M164 17.5h3M168 17.5h1M174 17.5h3M178 17.5h1M182 17.5h3M186 17.5h1M188 17.5h3M0 18.5h1M2 18.5h1M4 18.5h1M7 18.5h1M9 18.5h1M13 18.5h1M15 18.5h2M18 18.5h2M24 18.5h2M35 18.5h3M39 18.5h1M42 18.5h2M48 18.5h2M52 18.5h2M58 18.5h2M62 18.5h1M64 18.5h1M68 18.5h2M71 18.5h1M73 18.5h5M79 18.5h4M84 18.5h2M90 18.5h1M92 18.5h4M97 18.5h3M103 18.5h2M107 18.5h2M111 18.5h1M118 18.5h2M121 18.5h1M128 18.5h1M131 18.5h1M133 18.5h1M135 18.5h6M142 18.5h1M144 18.5h3M155 18.5h2M158 18.5h1M163 18.5h1M165 18.5h4M170 18.5h1M173 18.5h1M175 18.5h1M178 18.5h2M181 18.5h2M185 18.5h1M187 18.5h1M189 18.5h2M0 19.5h2M5 19.5h12M18 19.5h2M25 19.5h2M31 19.5h2M36 19.5h2M39 19.5h1M41 19.5h2M45 19.5h3M50 19.5h1M52 19.5h1M54 19.5h1M59 19.5h1M61 19.5h2M66 19.5h1M70 19.5h1M73 19.5h4M78 19.5h1M81 19.5h2M84 19.5h1M89 19.5h1M91 19.5h2M97 19.5h2M102 19.5h2M106 19.5h2M109 19.5h1M111 19.5h1M114 19.5h1M117 19.5h3M121 19.5h1M124 19.5h1M126 19.5h3M133 19.5h1M136 19.5h1M144 19.5h2M148 19.5h3M153 19.5h1M155 19.5h2M159 19.5h1M163 19.5h1M166 19.5h2M171 19.5h1M173 19.5h1M175 19.5h1M177 19.5h2M185 19.5h2M188 19.5h4M0 20.5h2M6 20.5h1M8 20.5h1M11 20.5h5M18 20.5h1M26 20.5h1M28 20.5h3M34 20.5h5M42 20.5h1M44 20.5h4M49 20.5h5M56 20.5h2M60 20.5h2M63 20.5h2M66 20.5h4M71 20.5h2M75 20.5h3M81 20.5h1M84 20.5h1M95 20.5h2M98 20.5h2M101 20.5h1M105 20.5h2M108 20.5h3M114 20.5h5M120 20.5h3M124 20.5h1M127 20.5h2M130 20.5h4M135 20.5h1M137 20.5h1M139 20.5h3M143 20.5h1M145 20.5h1M147 20.5h2M150 20.5h1M152 20.5h1M156 20.5h7M164 20.5h2M168 20.5h2M171 20.5h1M173 20.5h1M175 20.5h8M186 20.5h2M189 20.5h1M0 21.5h2M7 21.5h3M11 21.5h1M15 21.5h8M24 21.5h2M28 21.5h1M30 21.5h1M32 21.5h1M37 21.5h1M39 21.5h1M41 21.5h1M44 21.5h1M46 21.5h2M49 21.5h1M53 21.5h1M55 21.5h2M59 21.5h2M64 21.5h1M67 21.5h6M82 21.5h1M84 21.5h2M87 21.5h4M93 21.5h1M96 21.5h1M98 21.5h1M100 21.5h2M104 21.5h7M114 21.5h1M116 21.5h1M118 21.5h1M121 21.5h1M125 21.5h1M131 21.5h1M133 21.5h1M135 21.5h2M138 21.5h1M140 21.5h2M143 21.5h1M145 21.5h1M147 21.5h1M150 21.5h2M153 21.5h1M156 21.5h4M162 21.5h1M164 21.5h1M166 21.5h1M168 21.5h1M172 21.5h1M174 21.5h1M176 21.5h5M186 21.5h3M0 22.5h1M7 22.5h2M18 22.5h2M21 22.5h5M27 22.5h3M35 22.5h1M37 22.5h2M40 22.5h2M44 22.5h1M47 22.5h1M49 22.5h2M60 22.5h2M63 22.5h1M66 22.5h2M71 22.5h1M76 22.5h4M81 22.5h2M89 22.5h1M92 22.5h1M96 22.5h1M98 22.5h1M100 22.5h3M104 22.5h1M106 22.5h1M110 22.5h2M113 22.5h2M116 22.5h1M120 22.5h3M124 22.5h1M127 22.5h2M133 22.5h1M135 22.5h1M139 22.5h2M144 22.5h2M148 22.5h1M150 22.5h1M154 22.5h1M156 22.5h1M159 22.5h1M163 22.5h1M166 22.5h3M172 22.5h1M174 22.5h2M178 22.5h4M185 22.5h1M187 22.5h1M190 22.5h1M2 23.5h3M9 23.5h2M16 23.5h1M20 23.5h2M24 23.5h3M28 23.5h5M40 23.5h3M44 23.5h1M49 23.5h1M52 23.5h6M60 23.5h1M62 23.5h1M65 23.5h5M72 23.5h2M76 23.5h1M81 23.5h3M86 23.5h2M89 23.5h4M95 23.5h1M100 23.5h1M103 23.5h2M107 23.5h2M110 23.5h1M112 23.5h3M117 23.5h1M120 23.5h1M124 23.5h1M128 23.5h1M130 23.5h1M132 23.5h1M134 23.5h2M138 23.5h1M140 23.5h1M142 23.5h2M146 23.5h2M149 23.5h2M152 23.5h1M154 23.5h1M156 23.5h1M160 23.5h1M163 23.5h1M167 23.5h1M169 23.5h1M171 23.5h2M174 23.5h1M176 23.5h1M180 23.5h1M182 23.5h2M185 23.5h1M189 23.5h1M0 24.5h1M3 24.5h2M6 24.5h1M9 24.5h1M15 24.5h1M19 24.5h2M22 24.5h2M26 24.5h3M32 24.5h1M36 24.5h1M38 24.5h3M42 24.5h1M46 24.5h2M49 24.5h1M53 24.5h3M60 24.5h1M71 24.5h2M77 24.5h1M82 24.5h2M85 24.5h2M89 24.5h3M94 24.5h1M96 24.5h3M100 24.5h1M102 24.5h4M111 24.5h1M113 24.5h2M118 24.5h1M121 24.5h2M127 24.5h1M131 24.5h3M135 24.5h1M137 24.5h2M140 24.5h2M143 24.5h5M149 24.5h1M154 24.5h1M161 24.5h1M163 24.5h2M167 24.5h1M170 24.5h1M172 24.5h2M175 24.5h1M177 24.5h1M179 24.5h4M189 24.5h1M191 24.5h1M2 25.5h3M7 25.5h1M11 25.5h1M14 25.5h1M17 25.5h1M20 25.5h1M23 25.5h2M29 25.5h1M31 25.5h2M36 25.5h2M41 25.5h2M44 25.5h1M46 25.5h1M48 25.5h1M50 25.5h2M53 25.5h5M59 25.5h1M62 25.5h2M68 25.5h1M71 25.5h1M79 25.5h1M81 25.5h1M83 25.5h1M85 25.5h2M88 25.5h2M91 25.5h1M94 25.5h2M97 25.5h1M110 25.5h1M112 25.5h1M116 25.5h4M121 25.5h2M124 25.5h1M132 25.5h3M139 25.5h1M144 25.5h4M155 25.5h3M159 25.5h1M162 25.5h1M164 25.5h1M166 25.5h1M172 25.5h1M175 25.5h1M177 25.5h1M187 25.5h3M191 25.5h1M0 26.5h1M3 26.5h1M10 26.5h1M13 26.5h3M17 26.5h4M23 26.5h1M27 26.5h1M36 26.5h8M48 26.5h1M52 26.5h1M54 26.5h2M60 26.5h1M64 26.5h1M66 26.5h1M68 26.5h2M73 26.5h1M80 26.5h1M85 26.5h1M87 26.5h2M90 26.5h2M93 26.5h3M97 26.5h3M101 26.5h1M104 26.5h1M110 26.5h1M112 26.5h2M119 26.5h2M122 26.5h1M125 26.5h1M127 26.5h2M133 26.5h1M140 26.5h3M144 26.5h2M148 26.5h3M154 26.5h1M156 26.5h2M159 26.5h2M166 26.5h1M168 26.5h3M174 26.5h1M176 26.5h1M178 26.5h3M183 26.5h4M188 26.5h1M0 27.5h2M4 27.5h4M12 27.5h1M14 27.5h1M16 27.5h1M18 27.5h4M24 27.5h1M26 27.5h2M31 27.5h2M35 27.5h1M41 27.5h3M51 27.5h1M53 27.5h2M57 27.5h2M62 27.5h1M64 27.5h1M69 27.5h2M75 27.5h1M77 27.5h2M81 27.5h2M86 27.5h2M90 27.5h2M93 27.5h1M96 27.5h5M105 27.5h1M107 27.5h1M109 27.5h1M112 27.5h1M114 27.5h4M119 27.5h4M126 27.5h3M132 27.5h1M136 27.5h1M138 27.5h1M140 27.5h1M146 27.5h1M148 27.5h1M150 27.5h2M153 27.5h3M157 27.5h1M159 27.5h3M163 27.5h1M167 27.5h2M171 27.5h3M178 27.5h5M184 27.5h6M191 27.5h1M0 28.5h1M5 28.5h2M13 28.5h1M17 28.5h1M19 28.5h3M23 28.5h1M27 28.5h1M29 28.5h1M36 28.5h1M40 28.5h3M50 28.5h4M56 28.5h3M61 28.5h1M65 28.5h1M69 28.5h1M71 28.5h3M75 28.5h1M78 28.5h2M82 28.5h1M85 28.5h1M87 28.5h3M91 28.5h1M97 28.5h1M99 28.5h3M105 28.5h3M111 28.5h1M116 28.5h2M119 28.5h2M123 28.5h1M125 28.5h3M130 28.5h1M132 28.5h3M136 28.5h1M140 28.5h1M144 28.5h1M153 28.5h2M157 28.5h3M161 28.5h2M165 28.5h2M168 28.5h1M171 28.5h1M173 28.5h1M179 28.5h2M182 28.5h1M185 28.5h1M187 28.5h2M2 29.5h2M5 29.5h1M7 29.5h3M12 29.5h4M20 29.5h1M25 29.5h1M31 29.5h1M34 29.5h2M37 29.5h3M41 29.5h1M47 29.5h1M51 29.5h5M57 29.5h3M61 29.5h1M63 29.5h3M68 29.5h1M70 29.5h2M77 29.5h2M81 29.5h5M95 29.5h1M99 29.5h1M101 29.5h1M103 29.5h2M113 29.5h2M116 29.5h2M119 29.5h3M123 29.5h1M126 29.5h2M133 29.5h1M136 29.5h2M142 29.5h1M144 29.5h1M149 29.5h1M151 29.5h2M154 29.5h1M156 29.5h1M158 29.5h3M162 29.5h3M166 29.5h1M169 29.5h5M179 29.5h2M183 29.5h1M185 29.5h4M0 30.5h1M2 30.5h4M10 30.5h1M12 30.5h1M14 30.5h1M16 30.5h1M18 30.5h1M23 30.5h1M25 30.5h1M27 30.5h2M31 30.5h3M35 30.5h2M40 30.5h1M42 30.5h3M48 30.5h2M51 30.5h1M53 30.5h2M56 30.5h3M60 30.5h1M62 30.5h2M68 30.5h1M78 30.5h1M81 30.5h2M84 30.5h1M86 30.5h1M90 30.5h6M100 30.5h1M102 30.5h1M106 30.5h3M114 30.5h2M117 30.5h2M123 30.5h2M127 30.5h2M130 30.5h1M132 30.5h2M135 30.5h1M139 30.5h2M144 30.5h1M146 30.5h1M151 30.5h2M156 30.5h3M162 30.5h1M167 30.5h3M171 30.5h3M175 30.5h2M179 30.5h2M185 30.5h1M187 30.5h2M191 30.5h1M0 31.5h1M4 31.5h3M8 31.5h2M11 31.5h1M13 31.5h1M22 31.5h2M26 31.5h1M30 31.5h1M32 31.5h1M35 31.5h1M44 31.5h2M49 31.5h5M55 31.5h1M59 31.5h5M72 31.5h1M74 31.5h2M82 31.5h2M85 31.5h2M88 31.5h3M92 31.5h5M100 31.5h2M103 31.5h2M106 31.5h1M109 31.5h3M113 31.5h1M115 31.5h1M117 31.5h3M122 31.5h1M124 31.5h1M126 31.5h1M130 31.5h4M136 31.5h1M138 31.5h1M152 31.5h1M155 31.5h1M158 31.5h1M162 31.5h2M165 31.5h3M169 31.5h2M174 31.5h1M177 31.5h1M186 31.5h4M2 32.5h1M8 32.5h1M10 32.5h1M19 32.5h1M21 32.5h2M30 32.5h1M33 32.5h2M36 32.5h1M39 32.5h5M47 32.5h1M50 32.5h1M54 32.5h2M58 32.5h1M60 32.5h1M63 32.5h1M66 32.5h1M69 32.5h1M71 32.5h4M80 32.5h1M85 32.5h2M90 32.5h1M92 32.5h3M96 32.5h2M99 32.5h4M104 32.5h1M107 32.5h2M112 32.5h3M118 32.5h3M122 32.5h3M126 32.5h1M130 32.5h4M139 32.5h1M141 32.5h1M143 32.5h1M145 32.5h2M153 32.5h4M158 32.5h1M161 32.5h1M163 32.5h5M169 32.5h1M172 32.5h1M175 32.5h1M178 32.5h2M186 32.5h4M3 33.5h2M7 33.5h1M9 33.5h1M14 33.5h2M20 33.5h1M22 33.5h1M24 33.5h1M31 33.5h2M34 33.5h1M37 33.5h1M40 33.5h2M46 33.5h2M50 33.5h1M54 33.5h1M56 33.5h2M59 33.5h2M64 33.5h1M67 33.5h5M78 33.5h1M81 33.5h2M85 33.5h2M88 33.5h2M91 33.5h2M95 33.5h1M97 33.5h4M102 33.5h2M107 33.5h4M114 33.5h1M117 33.5h1M120 33.5h2M123 33.5h1M126 33.5h1M128 33.5h1M130 33.5h4M135 33.5h1M139 33.5h1M143 33.5h2M150 33.5h2M153 33.5h1M157 33.5h1M159 33.5h1M162 33.5h1M164 33.5h2M168 33.5h1M170 33.5h2M173 33.5h2M176 33.5h1M180 33.5h3M184 33.5h1M186 33.5h1M188 33.5h4M0 34.5h3M4 34.5h4M9 34.5h2M12 34.5h3M16 34.5h1M19 34.5h1M23 34.5h2M27 34.5h1M31 34.5h1M34 34.5h3M39 34.5h5M48 34.5h1M51 34.5h1M53 34.5h1M55 34.5h4M65 34.5h1M67 34.5h1M69 34.5h3M78 34.5h2M81 34.5h1M84 34.5h1M86 34.5h1M91 34.5h3M100 34.5h2M103 34.5h2M106 34.5h4M111 34.5h1M115 34.5h1M119 34.5h1M121 34.5h1M127 34.5h2M130 34.5h3M135 34.5h2M142 34.5h1M144 34.5h2M148 34.5h1M150 34.5h5M156 34.5h5M162 34.5h1M165 34.5h4M172 34.5h1M175 34.5h1M177 34.5h1M179 34.5h4M189 34.5h1M0 35.5h1M5 35.5h1M15 35.5h1M17 35.5h1M20 35.5h3M25 35.5h1M28 35.5h1M31 35.5h3M35 35.5h1M37 35.5h3M42 35.5h1M44 35.5h2M54 35.5h1M63 35.5h1M66 35.5h2M72 35.5h1M74 35.5h1M77 35.5h5M86 35.5h1M88 35.5h1M92 35.5h1M95 35.5h1M97 35.5h2M100 35.5h1M104 35.5h2M107 35.5h1M113 35.5h7M121 35.5h1M123 35.5h1M127 35.5h1M132 35.5h2M137 35.5h4M142 35.5h1M148 35.5h1M150 35.5h2M154 35.5h1M160 35.5h1M162 35.5h3M170 35.5h6M177 35.5h2M181 35.5h1M186 35.5h2M189 35.5h1M0 36.5h1M5 36.5h3M15 36.5h1M17 36.5h1M19 36.5h1M25 36.5h3M30 36.5h1M33 36.5h2M38 36.5h2M41 36.5h1M51 36.5h1M54 36.5h3M58 36.5h1M60 36.5h2M63 36.5h4M70 36.5h1M74 36.5h1M78 36.5h1M80 36.5h1M82 36.5h2M85 36.5h2M88 36.5h1M91 36.5h2M97 36.5h1M99 36.5h2M106 36.5h2M110 36.5h1M112 36.5h1M114 36.5h1M116 36.5h1M118 36.5h1M120 36.5h1M122 36.5h2M127 36.5h6M140 36.5h4M145 36.5h1M147 36.5h3M151 36.5h3M161 36.5h1M169 36.5h1M171 36.5h1M173 36.5h2M177 36.5h2M180 36.5h2M183 36.5h2M187 36.5h1M189 36.5h1M0 37.5h2M3 37.5h4M8 37.5h2M11 37.5h2M14 37.5h1M17 37.5h1M19 37.5h1M21 37.5h4M27 37.5h1M30 37.5h2M33 37.5h2M38 37.5h2M42 37.5h2M50 37.5h1M53 37.5h1M58 37.5h2M61 37.5h3M68 37.5h1M70 37.5h1M72 37.5h3M76 37.5h1M79 37.5h1M81 37.5h5M87 37.5h1M89 37.5h4M97 37.5h1M100 37.5h1M102 37.5h1M106 37.5h1M113 37.5h1M115 37.5h1M117 37.5h1M119 37.5h3M124 37.5h1M126 37.5h1M128 37.5h1M130 37.5h1M134 37.5h1M136 37.5h2M141 37.5h2M144 37.5h3M150 37.5h1M154 37.5h1M160 37.5h3M164 37.5h3M168 37.5h1M170 37.5h3M176 37.5h1M179 37.5h1M181 37.5h1M183 37.5h2M189 37.5h1M0 38.5h5M6 38.5h2M9 38.5h3M13 38.5h1M24 38.5h4M29 38.5h2M32 38.5h2M37 38.5h2M42 38.5h1M45 38.5h2M50 38.5h2M54 38.5h1M56 38.5h1M58 38.5h4M63 38.5h1M70 38.5h1M72 38.5h2M82 38.5h2M85 38.5h4M92 38.5h1M97 38.5h4M102 38.5h1M105 38.5h1M107 38.5h1M109 38.5h4M115 38.5h1M117 38.5h2M124 38.5h1M127 38.5h2M130 38.5h1M136 38.5h3M140 38.5h3M144 38.5h1M146 38.5h2M149 38.5h1M151 38.5h1M157 38.5h1M160 38.5h1M163 38.5h2M169 38.5h6M178 38.5h3M184 38.5h2M190 38.5h1M0 39.5h2M3 39.5h1M5 39.5h1M8 39.5h3M12 39.5h1M14 39.5h1M17 39.5h1M19 39.5h2M22 39.5h1M24 39.5h3M28 39.5h1M30 39.5h5M39 39.5h1M41 39.5h1M43 39.5h1M46 39.5h1M50 39.5h2M55 39.5h5M61 39.5h6M69 39.5h2M72 39.5h2M76 39.5h1M80 39.5h1M88 39.5h1M91 39.5h1M93 39.5h1M97 39.5h4M104 39.5h2M109 39.5h2M112 39.5h1M114 39.5h1M117 39.5h3M121 39.5h2M125 39.5h1M128 39.5h1M131 39.5h2M136 39.5h1M139 39.5h4M148 39.5h1M150 39.5h3M154 39.5h3M162 39.5h2M167 39.5h2M172 39.5h1M174 39.5h1M177 39.5h1M179 39.5h2M183 39.5h1M190 39.5h1M3 40.5h2M9 40.5h1M16 40.5h2M22 40.5h4M27 40.5h3M34 40.5h2M37 40.5h1M39 40.5h2M46 40.5h1M49 40.5h1M53 40.5h1M57 40.5h2M63 40.5h1M66 40.5h3M70 40.5h2M73 40.5h2M77 40.5h3M83 40.5h1M85 40.5h2M96 40.5h3M100 40.5h1M103 40.5h1M112 40.5h4M117 40.5h3M122 40.5h2M126 40.5h2M129 40.5h5M135 40.5h2M138 40.5h1M145 40.5h6M153 40.5h2M161 40.5h1M164 40.5h2M168 40.5h2M172 40.5h1M174 40.5h6M183 40.5h1M186 40.5h2M189 40.5h2M1 41.5h1M5 41.5h2M8 41.5h1M10 41.5h2M16 41.5h1M20 41.5h1M28 41.5h1M32 41.5h3M38 41.5h1M42 41.5h1M44 41.5h1M48 41.5h3M55 41.5h1M61 41.5h1M63 41.5h2M66 41.5h7M74 41.5h2M79 41.5h1M81 41.5h1M83 41.5h1M87 41.5h1M89 41.5h4M94 41.5h2M101 41.5h2M104 41.5h2M107 41.5h1M109 41.5h1M111 41.5h3M115 41.5h1M117 41.5h3M121 41.5h2M125 41.5h1M131 41.5h1M135 41.5h1M137 41.5h2M140 41.5h2M143 41.5h1M150 41.5h1M152 41.5h3M156 41.5h1M159 41.5h1M162 41.5h1M164 41.5h1M170 41.5h1M173 41.5h1M177 41.5h1M186 41.5h1M189 41.5h1M0 42.5h2M3 42.5h1M5 42.5h6M12 42.5h1M14 42.5h1M20 42.5h4M28 42.5h3M32 42.5h2M36 42.5h1M40 42.5h1M44 42.5h3M49 42.5h1M51 42.5h1M54 42.5h1M58 42.5h1M61 42.5h1M63 42.5h2M67 42.5h3M71 42.5h5M78 42.5h1M81 42.5h2M88 42.5h1M92 42.5h8M102 42.5h1M104 42.5h3M116 42.5h4M123 42.5h1M125 42.5h1M128 42.5h5M140 42.5h1M142 42.5h2M147 42.5h1M149 42.5h2M153 42.5h1M156 42.5h2M165 42.5h1M173 42.5h1M175 42.5h1M178 42.5h2M181 42.5h3M185 42.5h1M190 42.5h2M0 43.5h3M9 43.5h1M16 43.5h1M18 43.5h2M22 43.5h1M27 43.5h5M33 43.5h1M40 43.5h1M42 43.5h1M45 43.5h3M49 43.5h2M53 43.5h2M56 43.5h1M59 43.5h1M62 43.5h2M68 43.5h2M73 43.5h2M78 43.5h1M80 43.5h1M83 43.5h1M86 43.5h1M88 43.5h1M90 43.5h1M92 43.5h2M98 43.5h1M101 43.5h1M104 43.5h1M106 43.5h1M108 43.5h1M110 43.5h1M116 43.5h1M118 43.5h3M122 43.5h2M125 43.5h5M131 43.5h2M134 43.5h1M136 43.5h1M141 43.5h1M145 43.5h1M147 43.5h1M150 43.5h1M157 43.5h3M161 43.5h1M170 43.5h1M173 43.5h2M178 43.5h2M181 43.5h7M189 43.5h2M0 44.5h1M2 44.5h1M6 44.5h1M10 44.5h3M14 44.5h2M17 44.5h1M19 44.5h1M22 44.5h1M29 44.5h2M32 44.5h1M35 44.5h1M38 44.5h1M40 44.5h1M42 44.5h3M46 44.5h1M51 44.5h2M54 44.5h1M57 44.5h2M60 44.5h1M65 44.5h1M68 44.5h2M74 44.5h4M79 44.5h3M90 44.5h1M92 44.5h3M97 44.5h2M100 44.5h1M106 44.5h2M110 44.5h2M114 44.5h1M116 44.5h1M118 44.5h2M122 44.5h2M129 44.5h2M132 44.5h6M139 44.5h2M144 44.5h1M146 44.5h3M150 44.5h2M154 44.5h3M159 44.5h3M163 44.5h2M175 44.5h1M177 44.5h1M184 44.5h1M186 44.5h1" stroke="#99b7dc" stroke-width="1" fill="none"/></pattern></defs><rect width="1920" height="45" fill="url(#dz)"/><rect width="1920" height="0.8" fill="#6f8f9a" opacity="0.8"/></svg>
<svg class="b" style="left:22.00px;top:1046.00px;" width="18" height="22" viewBox="0 0 18 22"><rect x="3.4" y="2" width="5" height="14" rx="2.5" fill="#3b7fe0"/><circle cx="5.9" cy="16.6" r="3.6" fill="#1f5fd6"/><rect x="5" y="5" width="1.8" height="10" fill="#e8321e"/><path d="M12.4 8 V17 M10 14.6 L12.4 17.4 L14.8 14.6" fill="none" stroke="#1f4fd0" stroke-width="1.8"/></svg>
<div class="b" style="left:29.00px;top:1041.30px;width:15.00px;height:15.00px;background:#c42a1c;border-radius:7.5px;"></div>
<span class="t" style="left:33.72px;top:1044.00px;font-size:10px;color:#ffd9a0;-webkit-text-stroke:0.3px #ffd9a0;">2</span>
<span class="t" style="left:49.20px;top:1044.00px;font-size:12.2px;color:#1a1a1a;transform:scaleX(0.9229);-webkit-text-stroke:0.3px #1a1a1a;">Temps to plum...</span>
<span class="t" style="left:48.90px;top:1059.00px;font-size:12.2px;color:#3e4a52;transform:scaleX(0.8821);-webkit-text-stroke:0.3px #3e4a52;">Sunday</span>
<svg class="b" style="left:740.00px;top:1047.00px;" width="22.2" height="22.4" viewBox="0 0 22.2 22.4"><rect x="0" y="0" width="22.2" height="22.4" rx="1.6" fill="#0b47c4"/><path d="M0 0 H10.4 V10.6 H0 Z" fill="#2a6fe0"/><path d="M11.8 10.6 V4 L16 0 H22.2 V10.6 Z" fill="#1f5fd8"/><path d="M10.4 0 V22.4 M0 10.6 H22.2" stroke="#3f86ee" stroke-width="1.2" fill="none"/></svg>
<div class="b" style="left:775.80px;top:1043.20px;width:204.00px;height:28.60px;background:#d8fdfe;border-radius:14.3px;box-shadow:0 1px 1.5px rgba(40,60,110,0.45);"></div>
<svg class="b" style="left:786.00px;top:1049.00px;" width="16" height="17" viewBox="0 0 16 17"><circle cx="6.8" cy="6.8" r="5" fill="none" stroke="#111" stroke-width="1.9"/><path d="M10.4 10.6 L14.2 14.8" stroke="#111" stroke-width="2.2" stroke-linecap="round"/></svg>
<span class="t" style="left:809.70px;top:1052.00px;font-size:13.2px;color:#333;transform:scaleX(0.9062);-webkit-text-stroke:0.3px #333;">Search</span>
<svg class="b" style="left:930.00px;top:1046.00px;" width="46" height="24" viewBox="0 0 46 24"><path d="M2 10 C8 7 12 9 16 13 C12 15 6 15 2 10 Z" fill="#b8742a"/><path d="M6 3 C10 4 14 8 15 13 C11 12 7 8 6 3 Z" fill="#c8862e"/><path d="M6 18 C10 15 15 15 19 18 C14 21 9 21 6 18 Z" fill="#a85f22"/><path d="M14 12 L24 21" stroke="#8a4a1a" stroke-width="1.2"/><path d="M22 2 L24 5 L27 3 L27.4 7 L30 8 L27 11 L24 13 L21 11 L18.6 8 L21 6.6 Z" fill="#d63a1e"/><path d="M24 12 V17" stroke="#a52a14" stroke-width="1"/><ellipse cx="36.4" cy="15.6" rx="8.8" ry="7.2" fill="#e0561c"/><ellipse cx="36.4" cy="15.6" rx="4" ry="7" fill="#ee6e26"/><path d="M36 8.6 C35.6 6 36.6 4.4 37.8 3.4" stroke="#5a3a16" stroke-width="1.6" fill="none"/></svg>
<svg class="b" style="left:992.00px;top:1047.00px;" width="23" height="22" viewBox="0 0 23 22"><rect x="6.6" y="0.6" width="16" height="14.6" rx="1.2" fill="#eeeeee"/><rect x="0.4" y="6.6" width="16.6" height="14.8" rx="1.2" fill="#0a0a0a"/><path d="M6.6 6.6 H17 V15.2 H6.6 Z" fill="#8a8a8a"/></svg>
<svg class="b" style="left:1033.00px;top:1047.00px;" width="24" height="22" viewBox="0 0 24 22"><path d="M1 3 C1 2 1.6 1.2 2.8 1.2 H8.4 L10.8 3.6 H21 C22.2 3.6 23 4.4 23 5.6 V19 C23 20 22.2 20.8 21.2 20.8 H2.8 C1.8 20.8 1 20 1 19 Z" fill="#e8921c"/><path d="M1 7 H23 V19 C23 20 22.2 20.8 21.2 20.8 H2.8 C1.8 20.8 1 20 1 19 Z" fill="#f8b02a"/><rect x="5" y="15" width="14" height="5.8" rx="1.4" fill="#1456c8"/><rect x="7" y="16.8" width="10" height="2" rx="1" fill="#3f8af0"/></svg>
<svg class="b" style="left:1074.50px;top:1046.00px;" width="23" height="24" viewBox="0 0 23 24"><ellipse cx="11.5" cy="11.6" rx="10.6" ry="11" fill="#e8281a"/><path d="M11.5 0.6 C17.6 0.6 22.1 5.6 22.1 11.6 C22.1 17.6 17.6 22.6 11.5 22.6 C15 21 16.4 16.6 16.4 11.6 C16.4 6.6 15 2.2 11.5 0.6 Z" fill="#a81c12"/><ellipse cx="11.2" cy="11.6" rx="4.6" ry="7.6" fill="#90d6d8"/></svg>
<div class="b" style="left:1082.80px;top:1072.80px;width:6.00px;height:2.20px;background:#4a4a4a;border-radius:1.1px;"></div>
<svg class="b" style="left:1115.50px;top:1046.00px;" width="24" height="23" viewBox="0 0 24 23"><rect x="0.6" y="0.6" width="15.6" height="15.6" rx="2.4" fill="#e4e4e4"/><rect x="3" y="3" width="10.6" height="10.6" fill="none" stroke="#d23a22" stroke-width="1.8" stroke-dasharray="2.6 1.6"/><path d="M11 3 V17 M6 14 H20" stroke="#707070" stroke-width="1.6" fill="none"/><circle cx="21" cy="12.6" r="1.8" fill="none" stroke="#1f6fe0" stroke-width="1.3"/><circle cx="12.6" cy="20.4" r="1.8" fill="none" stroke="#1f6fe0" stroke-width="1.3"/></svg>
<svg class="b" style="left:1156.50px;top:1046.50px;" width="21" height="22" viewBox="0 0 21 22"><rect x="4.6" y="0.6" width="16" height="20.4" rx="2" fill="#0a3f1c"/><path d="M4.6 2.6 C4.6 1.4 5.4 0.6 6.6 0.6 H12.4 V6.4 H4.6 Z" fill="#3fae52"/><path d="M12.4 0.6 H18.6 C19.8 0.6 20.6 1.4 20.6 2.6 V6.4 H12.4 Z" fill="#2a8f44"/><rect x="12.4" y="6.4" width="8.2" height="5.6" fill="#0f5a2a"/><path d="M12.4 0.6 V12 M12.4 6.4 H20.6" stroke="#0a3a1a" stroke-width="0.7" fill="none"/><rect x="0.4" y="9" width="10.4" height="10.4" rx="2" fill="#06260f"/><path d="M3.4 11.6 L7.8 17 M7.8 11.6 L3.4 17" stroke="#fff" stroke-width="1.4" fill="none"/></svg>
<div class="b" style="left:1165.40px;top:1072.80px;width:6.00px;height:2.20px;background:#4a4a4a;border-radius:1.1px;"></div>
<svg class="b" style="left:1762.50px;top:1052.50px;" width="12" height="8" viewBox="0 0 12 8"><path d="M1.4 6.4 L6 1.8 L10.6 6.4" fill="none" stroke="#111" stroke-width="1.6"/></svg>
<svg class="b" style="left:1790.50px;top:1050.50px;" width="16" height="13" viewBox="0 0 16 13"><g fill="none" stroke="#111" stroke-width="1.3" stroke-linecap="round"><path d="M1 4.6 C5 0.6 11 0.6 15 4.6"/><path d="M3.4 7 C6 4.4 10 4.4 12.6 7"/><path d="M5.8 9.4 C7 8.2 9 8.2 10.2 9.4"/></g><circle cx="8" cy="11.2" r="1.2" fill="#111"/></svg>
<svg class="b" style="left:1812.50px;top:1050.50px;" width="16" height="13" viewBox="0 0 16 13"><path d="M1 4.6 H3.6 L7 1.6 V11.4 L3.6 8.4 H1 Z" fill="none" stroke="#111" stroke-width="1.2" stroke-linejoin="round"/><path d="M9 4.4 C10 5.6 10 7.4 9 8.6 M11 2.8 C12.8 5 12.8 8 11 10.2" fill="none" stroke="#111" stroke-width="1.1" stroke-linecap="round"/><path d="M13 1.4 C15.4 4.4 15.4 8.6 13 11.6" fill="none" stroke="#6a7a9a" stroke-width="1" stroke-linecap="round"/></svg>
<span class="t" style="left:1854.70px;top:1044.00px;font-size:12.2px;color:#111;transform:scaleX(0.9157);-webkit-text-stroke:0.3px #111;">10:12 AM</span>
<span class="t" style="left:1844.50px;top:1059.00px;font-size:12.2px;color:#111;transform:scaleX(0.9542);-webkit-text-stroke:0.3px #111;">11/13/2025</span>
</body></html>
